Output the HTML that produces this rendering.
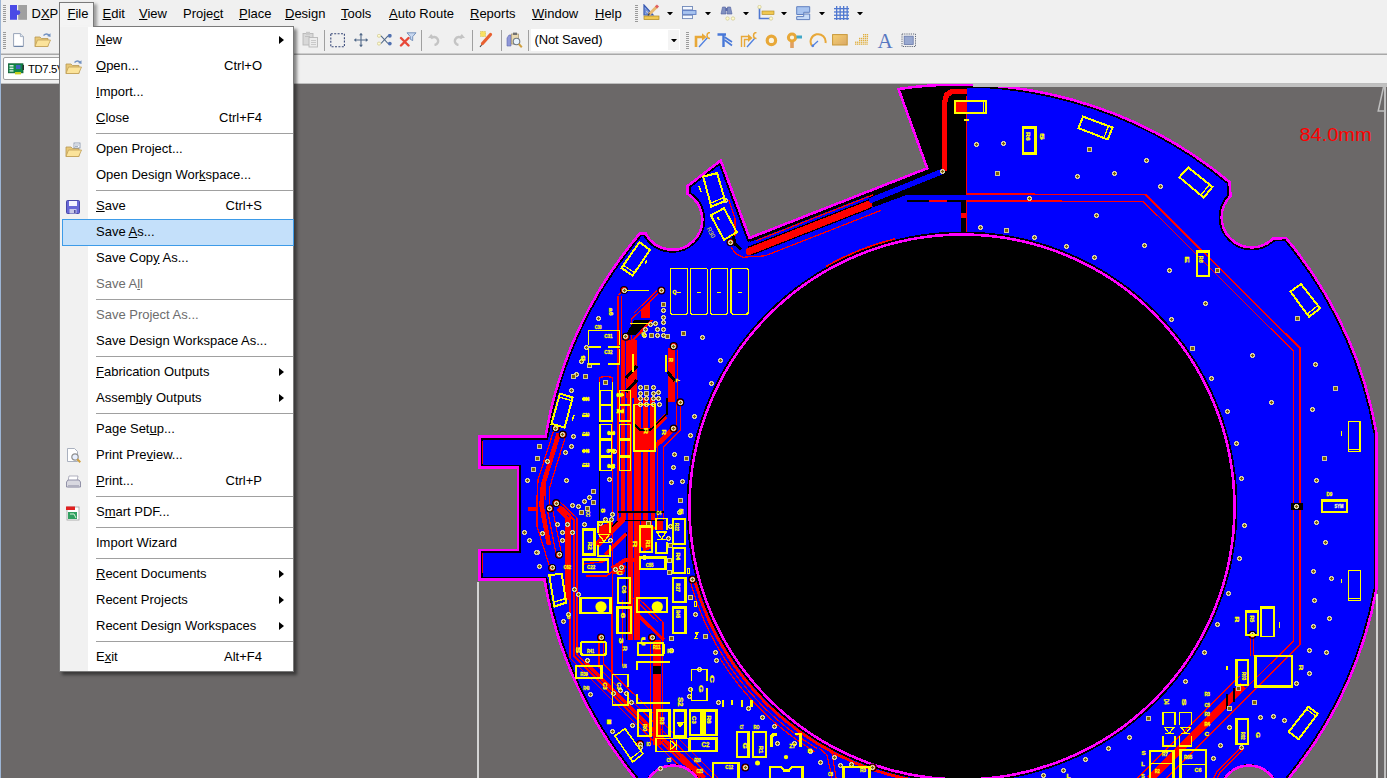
<!DOCTYPE html>
<html><head><meta charset="utf-8"><title>PCB</title>
<style>
*{box-sizing:border-box;margin:0;padding:0}
html,body{width:1387px;height:778px;overflow:hidden;background:#f0f0f0;font-family:"Liberation Sans",sans-serif;}
#root{position:absolute;left:0;top:0;width:1387px;height:778px;overflow:hidden;background:#f0f0f0}
#work{position:absolute;left:0;top:0;width:1387px;height:778px}
#menubar{position:absolute;left:0;top:0;height:27px;width:1387px;}
.mb{position:absolute;top:5.5px;font-size:13px;color:#000;white-space:nowrap;line-height:16px}
.mb u{text-decoration:underline;text-underline-offset:1px}
#filebtn{position:absolute;left:59px;top:2px;width:35px;height:25px;border:1px solid #7a7a7a;border-bottom:none;background:#f4f4f4;box-shadow:3px 2px 3px rgba(0,0,0,0.35)}
#menu{position:absolute;left:59px;top:26px;width:235px;height:646px;background:#fff;border:1px solid #7a7a7a;box-shadow:3px 3px 3px rgba(0,0,0,0.45);padding-top:0px}
#menu:before{content:"";position:absolute;left:0;top:0;width:28px;height:100%;background:#f1f1f1}
#menu:after{content:"";position:absolute;left:0;top:-1px;width:33px;height:1px;background:#f4f4f4}
.mi{position:relative;height:26px;font-size:13px;line-height:26px;white-space:nowrap;color:#000}
.mi .ml{position:absolute;left:36px;top:0}
.mi .ms{position:absolute;right:31px;top:0}
.mi .ma{position:absolute;left:219px;top:9px;width:0;height:0;border-left:5px solid #000;border-top:4px solid transparent;border-bottom:4px solid transparent}
.mi .mic{position:absolute;left:5px;top:5px;width:18px;height:18px}
.mi.hl:before{content:"";position:absolute;left:2px;top:0px;width:230px;height:25px;background:#c4e0fa;border:1px solid #3d9be8}
.mi.dis{color:#6d6d6d}
.msep{height:5px;position:relative}
.msep i{position:absolute;left:36px;right:0;top:2px;height:1px;background:#a0a0a0}
.tsep{position:absolute;top:30px;width:1px;height:21px;background:#a0a0a0}
.ico{position:absolute}
</style></head><body><div id="root">
<svg id="work" width="1387" height="778" viewBox="0 0 1387 778" shape-rendering="crispEdges">
<defs><clipPath id="bclip"><path d="M898.5,89 A421.5,421.5 0 0 1 1229.5,182 L1230.5,196 A30,30 0 1 0 1273,238.6 L1286,238 A421.5,421.5 0 0 1 1376.5,433 L1376.5,589 A421.5,421.5 0 0 1 1289,778 L1289,800 L635,800 L635,778 A421.5,421.5 0 0 1 544.5,579.7 L479.7,579.7 L479.7,550.1 L517.9,550.1 L517.9,467.5 L479.7,467.5 L479.7,436.7 L545.6,436.7 A421.5,421.5 0 0 1 640,233.3 L645.5,233.3 A30,30 0 1 0 687.7,194 L687.7,186 L720.7,160.4 L749.5,238 L927.2,168.3 Z"/></clipPath></defs>
<rect x="0" y="0" width="1387" height="778" fill="#6b6868"/>
<g clip-path="url(#bclip)"><path d="M898.5,89 A421.5,421.5 0 0 1 1229.5,182 L1230.5,196 A30,30 0 1 0 1273,238.6 L1286,238 A421.5,421.5 0 0 1 1376.5,433 L1376.5,589 A421.5,421.5 0 0 1 1289,778 L1289,800 L635,800 L635,778 A421.5,421.5 0 0 1 544.5,579.7 L479.7,579.7 L479.7,550.1 L517.9,550.1 L517.9,467.5 L479.7,467.5 L479.7,436.7 L545.6,436.7 A421.5,421.5 0 0 1 640,233.3 L645.5,233.3 A30,30 0 1 0 687.7,194 L687.7,186 L720.7,160.4 L749.5,238 L927.2,168.3 Z" fill="#0000ff" stroke="#000" stroke-width="6"/>
<polygon points="890,80 966.5,80 966.5,194.8 907,194.8 873,207.3 867.3,192.9 927.2,168.3" fill="#000000"/>
<polyline points="932.768,168.803 749.361,240.707" fill="none" stroke="#000000" stroke-width="3"/>
<polyline points="873.165,194.855 755.859,240.845" fill="none" stroke="#ff0000" stroke-width="1.2"/>
<polyline points="942.6,171.3 869.149,201.048" fill="none" stroke="#0000ff" stroke-width="5.5"/>
<polyline points="870.244,203.841 749.214,251.291" fill="none" stroke="#000000" stroke-width="9.5"/>
<polyline points="872.726,204.694 923,184.984" fill="none" stroke="#000000" stroke-width="4.5"/>
<polyline points="868.382,204.571 749.214,251.291" stroke-linecap="round" fill="none" stroke="#ff0000" stroke-width="7.2"/>
<polyline points="942.6,171.3 869.149,201.048" fill="none" stroke="#0000ff" stroke-width="5.5"/>
<polyline points="881.341,210.231 764.966,255.856 743.1,257.2 735.4,253.3 731,247" fill="none" stroke="#ff0000" stroke-width="1.2"/>
<polyline points="733,235 735,244 741,249.5" fill="none" stroke="#000000" stroke-width="3"/>
<polyline points="720.7,162 749.5,240" fill="none" stroke="#000000" stroke-width="5"/>
<polyline points="725.4,200.6 729,200.6 735,218 735,236" fill="none" stroke="#ff0000" stroke-width="1.2"/>
<rect x="907" y="200.2" width="59.5" height="1.4" fill="#000000"/>
<rect x="928.7" y="200.2" width="17.8" height="1.4" fill="#ff0000"/>
<rect x="961.4" y="88" width="5.1" height="107" fill="#000000"/>
<rect x="961.4" y="200.4" width="5.1" height="32.6" fill="#000000"/>
<rect x="961.4" y="212.5" width="5.1" height="5.5" fill="#ff0000"/>
<rect x="966" y="96" width="1.3" height="98" fill="#ff0000"/>
<rect x="966" y="201" width="1.3" height="31" fill="#ff0000"/>
<polyline points="966.5,91.5 952,91.5 946.5,95 944.3,104 944.3,171" stroke-linejoin="round" fill="none" stroke="#ff0000" stroke-width="5.5"/>
<polyline points="966.5,194.3 1145.6,194.6 1300.2,348.4 1300.2,644.3 1166,778.5" fill="none" stroke="#ff0000" stroke-width="1.8"/>
<polyline points="966.5,201 1143.2,201.3 1293.3,351.2 1293.3,640.8 1156,778" fill="none" stroke="#ff0000" stroke-width="1.3"/>
<rect x="1291" y="503" width="12" height="6.5" fill="#000000"/>
<rect x="967" y="193.4" width="59" height="1.8" fill="#ff0000"/>
<path d="M826.042,266.695 A276.1,276.1 0 0 1 895.205,239.101" fill="none" stroke="#ff0000" stroke-width="2.2"/>
<path d="M694.401,579.705 A277.3,277.3 0 0 0 933.014,782.781" fill="none" stroke="#ff0000" stroke-width="2.8"/>
<path d="M690.545,582.281 A281.7,281.7 0 0 0 816.914,748.464" fill="none" stroke="#ff0000" stroke-width="1.2"/>
<path d="M719.882,658.292 A285.5,285.5 0 0 0 814.957,751.721" fill="none" stroke="#ff0000" stroke-width="1.2"/>
<polyline points="823,745 832,753 836,778" fill="none" stroke="#ff0000" stroke-width="1.2"/>
<polyline points="819,748 827,755 832,778" fill="none" stroke="#ff0000" stroke-width="1.2"/>
<rect x="481.5" y="441" width="1.5" height="23" fill="#ff0000"/>
<rect x="481.5" y="553" width="1.5" height="20" fill="#ff0000"/>
<rect x="616.5" y="398" width="38.5" height="122" fill="#ff0000"/>
<rect x="619.3" y="398" width="1.5" height="122" fill="#0000ff"/>
<rect x="625" y="398" width="2.2" height="122" fill="#0000ff"/>
<rect x="631.9" y="398" width="1.9" height="122" fill="#0000ff"/>
<rect x="641.3" y="398" width="1.9" height="122" fill="#0000ff"/>
<rect x="648.2" y="398" width="1.8" height="122" fill="#0000ff"/>
<rect x="657.2" y="440" width="1.2" height="80" fill="#ff0000"/>
<rect x="662.6" y="450" width="1.2" height="70" fill="#ff0000"/>
<rect x="611.6" y="390" width="1" height="210" fill="#ff0000"/>
<rect x="598.8" y="400" width="0.8" height="120" fill="#000000"/>
<rect x="621" y="340" width="3.8" height="58" fill="#ff0000"/>
<rect x="626" y="340" width="11" height="58" fill="#ff0000"/>
<polyline points="626,378 637,366" fill="none" stroke="#000000" stroke-width="3"/>
<polyline points="626,392 637,380" fill="none" stroke="#000000" stroke-width="3"/>
<rect x="617.3" y="296" width="1.2" height="102" fill="#ff0000"/>
<rect x="620.6" y="296" width="1" height="44" fill="#ff0000"/>
<polyline points="624,290 618,295" fill="none" stroke="#ff0000" stroke-width="1.2"/>
<polygon points="661,291 641,310 641,318 650,318 650,302" fill="#ff0000"/>
<polyline points="661.4,290.5 631.7,319 631.7,340" fill="none" stroke="#ff0000" stroke-width="1.2"/>
<polyline points="657,290.5 634,313" fill="none" stroke="#ff0000" stroke-width="1.2"/>
<polygon points="634,320 650,320 636,335 626,335" fill="#000000"/>
<polyline points="652,320 632,341" fill="none" stroke="#ff0000" stroke-width="2.2"/>
<rect x="667.5" y="348" width="7.5" height="54" fill="#ff0000"/>
<polyline points="667.5,372 675,381" fill="none" stroke="#000000" stroke-width="3"/>
<rect x="676.5" y="350" width="1" height="50" fill="#ff0000"/>
<polyline points="680.3,402.3 680.3,430 663.2,447 663.2,470" fill="none" stroke="#ff0000" stroke-width="1.2"/>
<polyline points="676.5,402 676.5,425 657.8,443 657.8,470" fill="none" stroke="#ff0000" stroke-width="1.2"/>
<polyline points="673.7,428.6 652.5,449 652.5,470" fill="none" stroke="#ff0000" stroke-width="4.6"/>
<polyline points="666,416 645.5,436 645.5,470" fill="none" stroke="#ff0000" stroke-width="4.8"/>
<polygon points="634,428 655,428 655,440 648,452 634,452" fill="#ff0000"/>
<polyline points="634,424 640,430 650,430 667,414 667,398" fill="none" stroke="#000000" stroke-width="1.5"/>
<rect x="618" y="511.4" width="46" height="1.4" fill="#000000"/>
<rect x="616.5" y="513" width="38.5" height="7" fill="#ff0000"/>
<rect x="619.3" y="513" width="1.5" height="7" fill="#0000ff"/>
<rect x="625.7" y="513" width="1.8" height="7" fill="#0000ff"/>
<rect x="632.7" y="513" width="1.7" height="7" fill="#0000ff"/>
<rect x="641.3" y="513" width="1.7" height="7" fill="#0000ff"/>
<rect x="648.3" y="513" width="2.3" height="7" fill="#0000ff"/>
<rect x="618" y="519.5" width="46" height="1.3" fill="#000000"/>
<rect x="627.5" y="520.8" width="12" height="119.2" fill="#ff0000"/>
<rect x="632.7" y="520.8" width="1.5" height="119.2" fill="#0000ff"/>
<rect x="626.4" y="532" width="1" height="108" fill="#000000"/>
<polyline points="623,519 596,546" fill="none" stroke="#ff0000" stroke-width="6.5"/>
<polyline points="626,534 605,555" fill="none" stroke="#ff0000" stroke-width="3"/>
<polyline points="617.5,521 601,537" fill="none" stroke="#000000" stroke-width="1.6"/>
<polyline points="653,526 639,546" fill="none" stroke="#ff0000" stroke-width="5.5"/>
<rect x="657" y="520.8" width="6.3" height="8.7" fill="#ff0000"/>
<rect x="641" y="521" width="11" height="7" fill="#ff0000"/>
<polygon points="611,566 620,562.5 626,566 624,573.5 613,574" fill="#ff0000"/>
<polyline points="583.5,564 603,561.8 607,559" fill="none" stroke="#ff0000" stroke-width="1.4"/>
<polyline points="553.6,430.9 538,480 536.9,500 536.9,526 550,567.9" fill="none" stroke="#ff0000" stroke-width="1.3"/>
<polyline points="558.8,433.2 543,485 541.5,505 549,545" fill="none" stroke="#ff0000" stroke-width="4.6"/>
<polyline points="565.7,435.6 549.5,488 549.8,508.5" fill="none" stroke="#ff0000" stroke-width="1.3"/>
<polyline points="546,470 545.2,500" fill="none" stroke="#ff0000" stroke-width="1.2"/>
<rect x="528" y="506.5" width="10" height="4.5" fill="#ff0000"/>
<polyline points="549.8,508.5 559,554.8" stroke-linecap="round" fill="none" stroke="#ff0000" stroke-width="6.5"/>
<polyline points="549.8,508.5 559,554.8" stroke-linecap="round" fill="none" stroke="#0000ff" stroke-width="4"/>
<polyline points="556.2,503.1 574,520 574,656.3 647.7,730 700,778" fill="none" stroke="#ff0000" stroke-width="2.4"/>
<polyline points="560,502 577,518 577,654.8 654,731 702,778" fill="none" stroke="#ff0000" stroke-width="1.2"/>
<polyline points="563,507 570,514 570,658 640,728 692,778" fill="none" stroke="#ff0000" stroke-width="1.2"/>
<polyline points="558,509 567,518 567,600" fill="none" stroke="#ff0000" stroke-width="3.5"/>
<polyline points="585,662 604,681 650,727 705,778" fill="none" stroke="#ff0000" stroke-width="4"/>
<polyline points="599,640 599,668 640,709 712,778" fill="none" stroke="#ff0000" stroke-width="1.2"/>
<polyline points="603.5,640 603.5,664 646,706 718,778" fill="none" stroke="#ff0000" stroke-width="1.2"/>
<rect x="652.7" y="640" width="8.5" height="105" fill="#ff0000"/>
<rect x="652.7" y="665.6" width="8.5" height="8.4" fill="#000000"/>
<rect x="650" y="640" width="1" height="105" fill="#ff0000"/>
<rect x="662.4" y="630" width="1" height="115" fill="#ff0000"/>
<polyline points="638,598 662.9,622 662.9,640" fill="none" stroke="#ff0000" stroke-width="1.2"/>
<polyline points="633,598 658,622" fill="none" stroke="#ff0000" stroke-width="1.2"/>
<polyline points="612,600 612,690" fill="none" stroke="#ff0000" stroke-width="1.2"/>
<polyline points="622.5,600 622.5,666" fill="none" stroke="#ff0000" stroke-width="1.2"/>
<polygon points="597,528 612,521 612,530 600,540" fill="#ff0000"/>
<polygon points="640,528 652,528 652,548 643,552" fill="#ff0000"/>
<polyline points="612,569 625,560 636,560" fill="none" stroke="#ff0000" stroke-width="4"/>
<polyline points="618,568 606,576 586,576" fill="none" stroke="#ff0000" stroke-width="1.5"/>
<polyline points="635,612 648,625 664,640" fill="none" stroke="#ff0000" stroke-width="3"/>
<polyline points="599.3,382 599.3,378 603,376.6 609,376.6 612.4,378 612.4,382" fill="none" stroke="#ff0000" stroke-width="1.5"/>
<polyline points="1240,676 1225.5,690 1137,778.5" fill="none" stroke="#ff0000" stroke-width="1.3"/>
<polyline points="1243,686 1150,779" fill="none" stroke="#ff0000" stroke-width="7.4"/>
<polyline points="1226.5,694 1226.5,709" fill="none" stroke="#000000" stroke-width="2"/>
<polyline points="1234,688 1234,702" fill="none" stroke="#000000" stroke-width="1.6"/>
<polyline points="1250.7,636 1250.7,656" fill="none" stroke="#ff0000" stroke-width="1.2"/>
<polyline points="1253.8,636 1253.8,656" fill="none" stroke="#ff0000" stroke-width="1.2"/>
<polyline points="1240.7,747.7 1237.3,751.1 1217,771.4 1213.6,778" fill="none" stroke="#ff0000" stroke-width="1.3"/>
<polyline points="1244.1,748.8 1219.8,773.1 1217,778" fill="none" stroke="#ff0000" stroke-width="1.3"/>
</g>
<path d="M898.5,89 A421.5,421.5 0 0 1 1229.5,182 L1230.5,196 A30,30 0 1 0 1273,238.6 L1286,238 A421.5,421.5 0 0 1 1376.5,433 L1376.5,589 A421.5,421.5 0 0 1 1289,778 L1289,800 L635,800 L635,778 A421.5,421.5 0 0 1 544.5,579.7 L479.7,579.7 L479.7,550.1 L517.9,550.1 L517.9,467.5 L479.7,467.5 L479.7,436.7 L545.6,436.7 A421.5,421.5 0 0 1 640,233.3 L645.5,233.3 A30,30 0 1 0 687.7,194 L687.7,186 L720.7,160.4 L749.5,238 L927.2,168.3 Z" fill="none" stroke="#ff00ff" stroke-width="2.6"/>
<circle cx="673" cy="794.5" r="30.5" fill="#000"/><circle cx="673" cy="794.5" r="29" fill="#6b6868" stroke="#ff00ff" stroke-width="2.6"/>
<circle cx="1249" cy="794.5" r="30.5" fill="#000"/><circle cx="1249" cy="794.5" r="29" fill="#6b6868" stroke="#ff00ff" stroke-width="2.6"/>
<circle cx="962" cy="507" r="274" fill="#000" stroke="#000" stroke-width="3"/>
<circle cx="962" cy="507" r="272.5" fill="none" stroke="#ff00ff" stroke-width="2.6"/>
<circle cx="555.9" cy="428" r="4" fill="#000" shape-rendering="auto"/><circle cx="555.9" cy="428" r="2.9" fill="#ff0000" shape-rendering="auto"/><rect x="553" y="427" width="5" height="3" fill="#d4cca8"/><rect x="554" y="426" width="3" height="5" fill="#d4cca8"/><rect x="554" y="428" width="3" height="1" fill="#806200"/><rect x="555" y="427" width="1" height="3" fill="#806200"/>
<circle cx="562.8" cy="434.6" r="4" fill="#000" shape-rendering="auto"/><circle cx="562.8" cy="434.6" r="2.9" fill="#ff0000" shape-rendering="auto"/><rect x="560" y="433" width="5" height="3" fill="#d4cca8"/><rect x="561" y="432" width="3" height="5" fill="#d4cca8"/><rect x="561" y="434" width="3" height="1" fill="#806200"/><rect x="562" y="433" width="1" height="3" fill="#806200"/>
<circle cx="624" cy="290" r="4" fill="#000" shape-rendering="auto"/><circle cx="624" cy="290" r="2.9" fill="#ff0000" shape-rendering="auto"/><rect x="622" y="289" width="5" height="3" fill="#d4cca8"/><rect x="623" y="288" width="3" height="5" fill="#d4cca8"/><rect x="623" y="290" width="3" height="1" fill="#806200"/><rect x="624" y="289" width="1" height="3" fill="#806200"/>
<circle cx="661.4" cy="290.5" r="4" fill="#000" shape-rendering="auto"/><circle cx="661.4" cy="290.5" r="2.9" fill="#ff0000" shape-rendering="auto"/><rect x="659" y="289" width="5" height="3" fill="#d4cca8"/><rect x="660" y="288" width="3" height="5" fill="#d4cca8"/><rect x="660" y="290" width="3" height="1" fill="#806200"/><rect x="661" y="289" width="1" height="3" fill="#806200"/>
<circle cx="625.9" cy="336.8" r="4" fill="#000" shape-rendering="auto"/><circle cx="625.9" cy="336.8" r="2.9" fill="#ff0000" shape-rendering="auto"/><rect x="623" y="335" width="5" height="3" fill="#d4cca8"/><rect x="624" y="334" width="3" height="5" fill="#d4cca8"/><rect x="624" y="336" width="3" height="1" fill="#806200"/><rect x="625" y="335" width="1" height="3" fill="#806200"/>
<circle cx="673.7" cy="346" r="4" fill="#000" shape-rendering="auto"/><circle cx="673.7" cy="346" r="2.9" fill="#ff0000" shape-rendering="auto"/><rect x="671" y="345" width="5" height="3" fill="#d4cca8"/><rect x="672" y="344" width="3" height="5" fill="#d4cca8"/><rect x="672" y="346" width="3" height="1" fill="#806200"/><rect x="673" y="345" width="1" height="3" fill="#806200"/>
<circle cx="680.3" cy="402.3" r="4" fill="#000" shape-rendering="auto"/><circle cx="680.3" cy="402.3" r="2.9" fill="#ff0000" shape-rendering="auto"/><rect x="678" y="401" width="5" height="3" fill="#d4cca8"/><rect x="679" y="400" width="3" height="5" fill="#d4cca8"/><rect x="679" y="402" width="3" height="1" fill="#806200"/><rect x="680" y="401" width="1" height="3" fill="#806200"/>
<circle cx="673.7" cy="428.6" r="4" fill="#000" shape-rendering="auto"/><circle cx="673.7" cy="428.6" r="2.9" fill="#ff0000" shape-rendering="auto"/><rect x="671" y="427" width="5" height="3" fill="#d4cca8"/><rect x="672" y="426" width="3" height="5" fill="#d4cca8"/><rect x="672" y="428" width="3" height="1" fill="#806200"/><rect x="673" y="427" width="1" height="3" fill="#806200"/>
<circle cx="556.2" cy="503.1" r="4" fill="#000" shape-rendering="auto"/><circle cx="556.2" cy="503.1" r="2.9" fill="#ff0000" shape-rendering="auto"/><rect x="554" y="502" width="5" height="3" fill="#d4cca8"/><rect x="555" y="501" width="3" height="5" fill="#d4cca8"/><rect x="555" y="503" width="3" height="1" fill="#806200"/><rect x="556" y="502" width="1" height="3" fill="#806200"/>
<circle cx="549.8" cy="508.5" r="4" fill="#000" shape-rendering="auto"/><circle cx="549.8" cy="508.5" r="2.9" fill="#ff0000" shape-rendering="auto"/><rect x="547" y="507" width="5" height="3" fill="#d4cca8"/><rect x="548" y="506" width="3" height="5" fill="#d4cca8"/><rect x="548" y="508" width="3" height="1" fill="#806200"/><rect x="549" y="507" width="1" height="3" fill="#806200"/>
<circle cx="559" cy="554.8" r="4" fill="#000" shape-rendering="auto"/><circle cx="559" cy="554.8" r="2.9" fill="#ff0000" shape-rendering="auto"/><rect x="557" y="553" width="5" height="3" fill="#d4cca8"/><rect x="558" y="552" width="3" height="5" fill="#d4cca8"/><rect x="558" y="554" width="3" height="1" fill="#806200"/><rect x="559" y="553" width="1" height="3" fill="#806200"/>
<circle cx="552.1" cy="567.9" r="4" fill="#000" shape-rendering="auto"/><circle cx="552.1" cy="567.9" r="2.9" fill="#ff0000" shape-rendering="auto"/><rect x="550" y="566" width="5" height="3" fill="#d4cca8"/><rect x="551" y="565" width="3" height="5" fill="#d4cca8"/><rect x="551" y="567" width="3" height="1" fill="#806200"/><rect x="552" y="566" width="1" height="3" fill="#806200"/>
<circle cx="692.4" cy="579.4" r="4" fill="#000" shape-rendering="auto"/><circle cx="692.4" cy="579.4" r="2.9" fill="#ff0000" shape-rendering="auto"/><rect x="690" y="578" width="5" height="3" fill="#d4cca8"/><rect x="691" y="577" width="3" height="5" fill="#d4cca8"/><rect x="691" y="579" width="3" height="1" fill="#806200"/><rect x="692" y="578" width="1" height="3" fill="#806200"/>
<circle cx="730.5" cy="242.2" r="4" fill="#000" shape-rendering="auto"/><circle cx="730.5" cy="242.2" r="2.9" fill="#ff0000" shape-rendering="auto"/><rect x="728" y="241" width="5" height="3" fill="#d4cca8"/><rect x="729" y="240" width="3" height="5" fill="#d4cca8"/><rect x="729" y="242" width="3" height="1" fill="#806200"/><rect x="730" y="241" width="1" height="3" fill="#806200"/>
<circle cx="1252.3" cy="634.8" r="4" fill="#000" shape-rendering="auto"/><circle cx="1252.3" cy="634.8" r="2.9" fill="#ff0000" shape-rendering="auto"/><rect x="1250" y="633" width="5" height="3" fill="#d4cca8"/><rect x="1251" y="632" width="3" height="5" fill="#d4cca8"/><rect x="1251" y="634" width="3" height="1" fill="#806200"/><rect x="1252" y="633" width="1" height="3" fill="#806200"/>
<circle cx="745.3" cy="767.4" r="4" fill="#000" shape-rendering="auto"/><circle cx="745.3" cy="767.4" r="2.9" fill="#ff0000" shape-rendering="auto"/><rect x="743" y="766" width="5" height="3" fill="#d4cca8"/><rect x="744" y="765" width="3" height="5" fill="#d4cca8"/><rect x="744" y="767" width="3" height="1" fill="#806200"/><rect x="745" y="766" width="1" height="3" fill="#806200"/>
<circle cx="872.7" cy="767.5" r="4" fill="#000" shape-rendering="auto"/><circle cx="872.7" cy="767.5" r="2.9" fill="#ff0000" shape-rendering="auto"/><rect x="870" y="766" width="5" height="3" fill="#d4cca8"/><rect x="871" y="765" width="3" height="5" fill="#d4cca8"/><rect x="871" y="767" width="3" height="1" fill="#806200"/><rect x="872" y="766" width="1" height="3" fill="#806200"/>
<circle cx="640" cy="744" r="4" fill="#000" shape-rendering="auto"/><circle cx="640" cy="744" r="2.9" fill="#ff0000" shape-rendering="auto"/><rect x="638" y="743" width="5" height="3" fill="#d4cca8"/><rect x="639" y="742" width="3" height="5" fill="#d4cca8"/><rect x="639" y="744" width="3" height="1" fill="#806200"/><rect x="640" y="743" width="1" height="3" fill="#806200"/>
<circle cx="601" cy="637.5" r="4" fill="#000" shape-rendering="auto"/><circle cx="601" cy="637.5" r="2.9" fill="#ff0000" shape-rendering="auto"/><rect x="599" y="636" width="5" height="3" fill="#d4cca8"/><rect x="600" y="635" width="3" height="5" fill="#d4cca8"/><rect x="600" y="637" width="3" height="1" fill="#806200"/><rect x="601" y="636" width="1" height="3" fill="#806200"/>
<circle cx="652" cy="637.5" r="4" fill="#000" shape-rendering="auto"/><circle cx="652" cy="637.5" r="2.9" fill="#ff0000" shape-rendering="auto"/><rect x="650" y="636" width="5" height="3" fill="#d4cca8"/><rect x="651" y="635" width="3" height="5" fill="#d4cca8"/><rect x="651" y="637" width="3" height="1" fill="#806200"/><rect x="652" y="636" width="1" height="3" fill="#806200"/>
<rect x="974" y="143" width="5" height="3" fill="#d4cca8"/><rect x="975" y="142" width="3" height="5" fill="#d4cca8"/><rect x="975" y="144" width="3" height="1" fill="#806200"/><rect x="976" y="143" width="1" height="3" fill="#806200"/>
<rect x="1001" y="142" width="5" height="3" fill="#d4cca8"/><rect x="1002" y="141" width="3" height="5" fill="#d4cca8"/><rect x="1002" y="143" width="3" height="1" fill="#806200"/><rect x="1003" y="142" width="1" height="3" fill="#806200"/>
<rect x="1075" y="175" width="5" height="3" fill="#d4cca8"/><rect x="1076" y="174" width="3" height="5" fill="#d4cca8"/><rect x="1076" y="176" width="3" height="1" fill="#806200"/><rect x="1077" y="175" width="1" height="3" fill="#806200"/>
<rect x="1112" y="172" width="5" height="3" fill="#d4cca8"/><rect x="1113" y="171" width="3" height="5" fill="#d4cca8"/><rect x="1113" y="173" width="3" height="1" fill="#806200"/><rect x="1114" y="172" width="1" height="3" fill="#806200"/>
<rect x="1144" y="159" width="5" height="3" fill="#d4cca8"/><rect x="1145" y="158" width="3" height="5" fill="#d4cca8"/><rect x="1145" y="160" width="3" height="1" fill="#806200"/><rect x="1146" y="159" width="1" height="3" fill="#806200"/>
<rect x="1158" y="185" width="5" height="3" fill="#d4cca8"/><rect x="1159" y="184" width="3" height="5" fill="#d4cca8"/><rect x="1159" y="186" width="3" height="1" fill="#806200"/><rect x="1160" y="185" width="1" height="3" fill="#806200"/>
<rect x="1094" y="214" width="5" height="3" fill="#d4cca8"/><rect x="1095" y="213" width="3" height="5" fill="#d4cca8"/><rect x="1095" y="215" width="3" height="1" fill="#806200"/><rect x="1096" y="214" width="1" height="3" fill="#806200"/>
<rect x="978" y="226" width="5" height="3" fill="#d4cca8"/><rect x="979" y="225" width="3" height="5" fill="#d4cca8"/><rect x="979" y="227" width="3" height="1" fill="#806200"/><rect x="980" y="226" width="1" height="3" fill="#806200"/>
<rect x="1032" y="236" width="5" height="3" fill="#d4cca8"/><rect x="1033" y="235" width="3" height="5" fill="#d4cca8"/><rect x="1033" y="237" width="3" height="1" fill="#806200"/><rect x="1034" y="236" width="1" height="3" fill="#806200"/>
<rect x="1064" y="245" width="5" height="3" fill="#d4cca8"/><rect x="1065" y="244" width="3" height="5" fill="#d4cca8"/><rect x="1065" y="246" width="3" height="1" fill="#806200"/><rect x="1066" y="245" width="1" height="3" fill="#806200"/>
<rect x="1092" y="256" width="5" height="3" fill="#d4cca8"/><rect x="1093" y="255" width="3" height="5" fill="#d4cca8"/><rect x="1093" y="257" width="3" height="1" fill="#806200"/><rect x="1094" y="256" width="1" height="3" fill="#806200"/>
<rect x="1142" y="244" width="5" height="3" fill="#d4cca8"/><rect x="1143" y="243" width="3" height="5" fill="#d4cca8"/><rect x="1143" y="245" width="3" height="1" fill="#806200"/><rect x="1144" y="244" width="1" height="3" fill="#806200"/>
<rect x="1167" y="269" width="5" height="3" fill="#d4cca8"/><rect x="1168" y="268" width="3" height="5" fill="#d4cca8"/><rect x="1168" y="270" width="3" height="1" fill="#806200"/><rect x="1169" y="269" width="1" height="3" fill="#806200"/>
<rect x="1203" y="302" width="5" height="3" fill="#d4cca8"/><rect x="1204" y="301" width="3" height="5" fill="#d4cca8"/><rect x="1204" y="303" width="3" height="1" fill="#806200"/><rect x="1205" y="302" width="1" height="3" fill="#806200"/>
<rect x="1169" y="318" width="5" height="3" fill="#d4cca8"/><rect x="1170" y="317" width="3" height="5" fill="#d4cca8"/><rect x="1170" y="319" width="3" height="1" fill="#806200"/><rect x="1171" y="318" width="1" height="3" fill="#806200"/>
<rect x="1250" y="354" width="5" height="3" fill="#d4cca8"/><rect x="1251" y="353" width="3" height="5" fill="#d4cca8"/><rect x="1251" y="355" width="3" height="1" fill="#806200"/><rect x="1252" y="354" width="1" height="3" fill="#806200"/>
<rect x="1209" y="377" width="5" height="3" fill="#d4cca8"/><rect x="1210" y="376" width="3" height="5" fill="#d4cca8"/><rect x="1210" y="378" width="3" height="1" fill="#806200"/><rect x="1211" y="377" width="1" height="3" fill="#806200"/>
<rect x="1269" y="401" width="5" height="3" fill="#d4cca8"/><rect x="1270" y="400" width="3" height="5" fill="#d4cca8"/><rect x="1270" y="402" width="3" height="1" fill="#806200"/><rect x="1271" y="401" width="1" height="3" fill="#806200"/>
<rect x="1225" y="410" width="5" height="3" fill="#d4cca8"/><rect x="1226" y="409" width="3" height="5" fill="#d4cca8"/><rect x="1226" y="411" width="3" height="1" fill="#806200"/><rect x="1227" y="410" width="1" height="3" fill="#806200"/>
<rect x="1313" y="363" width="5" height="3" fill="#d4cca8"/><rect x="1314" y="362" width="3" height="5" fill="#d4cca8"/><rect x="1314" y="364" width="3" height="1" fill="#806200"/><rect x="1315" y="363" width="1" height="3" fill="#806200"/>
<rect x="1310" y="408" width="5" height="3" fill="#d4cca8"/><rect x="1311" y="407" width="3" height="5" fill="#d4cca8"/><rect x="1311" y="409" width="3" height="1" fill="#806200"/><rect x="1312" y="408" width="1" height="3" fill="#806200"/>
<rect x="1234" y="442" width="5" height="3" fill="#d4cca8"/><rect x="1235" y="441" width="3" height="5" fill="#d4cca8"/><rect x="1235" y="443" width="3" height="1" fill="#806200"/><rect x="1236" y="442" width="1" height="3" fill="#806200"/>
<rect x="1239" y="477" width="5" height="3" fill="#d4cca8"/><rect x="1240" y="476" width="3" height="5" fill="#d4cca8"/><rect x="1240" y="478" width="3" height="1" fill="#806200"/><rect x="1241" y="477" width="1" height="3" fill="#806200"/>
<rect x="1242" y="524" width="5" height="3" fill="#d4cca8"/><rect x="1243" y="523" width="3" height="5" fill="#d4cca8"/><rect x="1243" y="525" width="3" height="1" fill="#806200"/><rect x="1244" y="524" width="1" height="3" fill="#806200"/>
<rect x="1237" y="557" width="5" height="3" fill="#d4cca8"/><rect x="1238" y="556" width="3" height="5" fill="#d4cca8"/><rect x="1238" y="558" width="3" height="1" fill="#806200"/><rect x="1239" y="557" width="1" height="3" fill="#806200"/>
<rect x="1226" y="592" width="5" height="3" fill="#d4cca8"/><rect x="1227" y="591" width="3" height="5" fill="#d4cca8"/><rect x="1227" y="593" width="3" height="1" fill="#806200"/><rect x="1228" y="592" width="1" height="3" fill="#806200"/>
<rect x="1314" y="479" width="5" height="3" fill="#d4cca8"/><rect x="1315" y="478" width="3" height="5" fill="#d4cca8"/><rect x="1315" y="480" width="3" height="1" fill="#806200"/><rect x="1316" y="479" width="1" height="3" fill="#806200"/>
<rect x="1314" y="521" width="5" height="3" fill="#d4cca8"/><rect x="1315" y="520" width="3" height="5" fill="#d4cca8"/><rect x="1315" y="522" width="3" height="1" fill="#806200"/><rect x="1316" y="521" width="1" height="3" fill="#806200"/>
<rect x="1323" y="541" width="5" height="3" fill="#d4cca8"/><rect x="1324" y="540" width="3" height="5" fill="#d4cca8"/><rect x="1324" y="542" width="3" height="1" fill="#806200"/><rect x="1325" y="541" width="1" height="3" fill="#806200"/>
<rect x="1311" y="570" width="5" height="3" fill="#d4cca8"/><rect x="1312" y="569" width="3" height="5" fill="#d4cca8"/><rect x="1312" y="571" width="3" height="1" fill="#806200"/><rect x="1313" y="570" width="1" height="3" fill="#806200"/>
<rect x="1329" y="577" width="5" height="3" fill="#d4cca8"/><rect x="1330" y="576" width="3" height="5" fill="#d4cca8"/><rect x="1330" y="578" width="3" height="1" fill="#806200"/><rect x="1331" y="577" width="1" height="3" fill="#806200"/>
<rect x="1312" y="599" width="5" height="3" fill="#d4cca8"/><rect x="1313" y="598" width="3" height="5" fill="#d4cca8"/><rect x="1313" y="600" width="3" height="1" fill="#806200"/><rect x="1314" y="599" width="1" height="3" fill="#806200"/>
<rect x="1327" y="617" width="5" height="3" fill="#d4cca8"/><rect x="1328" y="616" width="3" height="5" fill="#d4cca8"/><rect x="1328" y="618" width="3" height="1" fill="#806200"/><rect x="1329" y="617" width="1" height="3" fill="#806200"/>
<rect x="1311" y="625" width="5" height="3" fill="#d4cca8"/><rect x="1312" y="624" width="3" height="5" fill="#d4cca8"/><rect x="1312" y="626" width="3" height="1" fill="#806200"/><rect x="1313" y="625" width="1" height="3" fill="#806200"/>
<rect x="1307" y="649" width="5" height="3" fill="#d4cca8"/><rect x="1308" y="648" width="3" height="5" fill="#d4cca8"/><rect x="1308" y="650" width="3" height="1" fill="#806200"/><rect x="1309" y="649" width="1" height="3" fill="#806200"/>
<rect x="1324" y="651" width="5" height="3" fill="#d4cca8"/><rect x="1325" y="650" width="3" height="5" fill="#d4cca8"/><rect x="1325" y="652" width="3" height="1" fill="#806200"/><rect x="1326" y="651" width="1" height="3" fill="#806200"/>
<rect x="1307" y="672" width="5" height="3" fill="#d4cca8"/><rect x="1308" y="671" width="3" height="5" fill="#d4cca8"/><rect x="1308" y="673" width="3" height="1" fill="#806200"/><rect x="1309" y="672" width="1" height="3" fill="#806200"/>
<rect x="1294" y="682" width="5" height="3" fill="#d4cca8"/><rect x="1295" y="681" width="3" height="5" fill="#d4cca8"/><rect x="1295" y="683" width="3" height="1" fill="#806200"/><rect x="1296" y="682" width="1" height="3" fill="#806200"/>
<rect x="1215" y="623" width="5" height="3" fill="#d4cca8"/><rect x="1216" y="622" width="3" height="5" fill="#d4cca8"/><rect x="1216" y="624" width="3" height="1" fill="#806200"/><rect x="1217" y="623" width="1" height="3" fill="#806200"/>
<rect x="1202" y="651" width="5" height="3" fill="#d4cca8"/><rect x="1203" y="650" width="3" height="5" fill="#d4cca8"/><rect x="1203" y="652" width="3" height="1" fill="#806200"/><rect x="1204" y="651" width="1" height="3" fill="#806200"/>
<rect x="1183" y="680" width="5" height="3" fill="#d4cca8"/><rect x="1184" y="679" width="3" height="5" fill="#d4cca8"/><rect x="1184" y="681" width="3" height="1" fill="#806200"/><rect x="1185" y="680" width="1" height="3" fill="#806200"/>
<rect x="1258" y="716" width="5" height="3" fill="#d4cca8"/><rect x="1259" y="715" width="3" height="5" fill="#d4cca8"/><rect x="1259" y="717" width="3" height="1" fill="#806200"/><rect x="1260" y="716" width="1" height="3" fill="#806200"/>
<rect x="1271" y="715" width="5" height="3" fill="#d4cca8"/><rect x="1272" y="714" width="3" height="5" fill="#d4cca8"/><rect x="1272" y="716" width="3" height="1" fill="#806200"/><rect x="1273" y="715" width="1" height="3" fill="#806200"/>
<rect x="1282" y="719" width="5" height="3" fill="#d4cca8"/><rect x="1283" y="718" width="3" height="5" fill="#d4cca8"/><rect x="1283" y="720" width="3" height="1" fill="#806200"/><rect x="1284" y="719" width="1" height="3" fill="#806200"/>
<rect x="1227" y="726" width="5" height="3" fill="#d4cca8"/><rect x="1228" y="725" width="3" height="5" fill="#d4cca8"/><rect x="1228" y="727" width="3" height="1" fill="#806200"/><rect x="1229" y="726" width="1" height="3" fill="#806200"/>
<rect x="1218" y="744" width="5" height="3" fill="#d4cca8"/><rect x="1219" y="743" width="3" height="5" fill="#d4cca8"/><rect x="1219" y="745" width="3" height="1" fill="#806200"/><rect x="1220" y="744" width="1" height="3" fill="#806200"/>
<rect x="1211" y="757" width="5" height="3" fill="#d4cca8"/><rect x="1212" y="756" width="3" height="5" fill="#d4cca8"/><rect x="1212" y="758" width="3" height="1" fill="#806200"/><rect x="1213" y="757" width="1" height="3" fill="#806200"/>
<rect x="1239" y="746" width="5" height="3" fill="#d4cca8"/><rect x="1240" y="745" width="3" height="5" fill="#d4cca8"/><rect x="1240" y="747" width="3" height="1" fill="#806200"/><rect x="1241" y="746" width="1" height="3" fill="#806200"/>
<rect x="723" y="199" width="5" height="3" fill="#d4cca8"/><rect x="724" y="198" width="3" height="5" fill="#d4cca8"/><rect x="724" y="200" width="3" height="1" fill="#806200"/><rect x="725" y="199" width="1" height="3" fill="#806200"/>
<rect x="1127" y="736" width="5" height="3" fill="#d4cca8"/><rect x="1128" y="735" width="3" height="5" fill="#d4cca8"/><rect x="1128" y="737" width="3" height="1" fill="#806200"/><rect x="1129" y="736" width="1" height="3" fill="#806200"/>
<rect x="1106" y="747" width="5" height="3" fill="#d4cca8"/><rect x="1107" y="746" width="3" height="5" fill="#d4cca8"/><rect x="1107" y="748" width="3" height="1" fill="#806200"/><rect x="1108" y="747" width="1" height="3" fill="#806200"/>
<rect x="1083" y="758" width="5" height="3" fill="#d4cca8"/><rect x="1084" y="757" width="3" height="5" fill="#d4cca8"/><rect x="1084" y="759" width="3" height="1" fill="#806200"/><rect x="1085" y="758" width="1" height="3" fill="#806200"/>
<rect x="1061" y="769" width="5" height="3" fill="#d4cca8"/><rect x="1062" y="768" width="3" height="5" fill="#d4cca8"/><rect x="1062" y="770" width="3" height="1" fill="#806200"/><rect x="1063" y="769" width="1" height="3" fill="#806200"/>
<rect x="1041" y="774" width="5" height="3" fill="#d4cca8"/><rect x="1042" y="773" width="3" height="5" fill="#d4cca8"/><rect x="1042" y="775" width="3" height="1" fill="#806200"/><rect x="1043" y="774" width="1" height="3" fill="#806200"/>
<rect x="1027" y="197" width="5" height="3" fill="#d4cca8"/><rect x="1028" y="196" width="3" height="5" fill="#d4cca8"/><rect x="1028" y="198" width="3" height="1" fill="#806200"/><rect x="1029" y="197" width="1" height="3" fill="#806200"/>
<rect x="1294" y="505" width="5" height="3" fill="#d4cca8"/><rect x="1295" y="504" width="3" height="5" fill="#d4cca8"/><rect x="1295" y="506" width="3" height="1" fill="#806200"/><rect x="1296" y="505" width="1" height="3" fill="#806200"/>
<rect x="940" y="170" width="5" height="3" fill="#d4cca8"/><rect x="941" y="169" width="3" height="5" fill="#d4cca8"/><rect x="941" y="171" width="3" height="1" fill="#806200"/><rect x="942" y="170" width="1" height="3" fill="#806200"/>
<rect x="596" y="317" width="5" height="3" fill="#d4cca8"/><rect x="597" y="316" width="3" height="5" fill="#d4cca8"/><rect x="597" y="318" width="3" height="1" fill="#806200"/><rect x="598" y="317" width="1" height="3" fill="#806200"/>
<rect x="584" y="346" width="5" height="3" fill="#d4cca8"/><rect x="585" y="345" width="3" height="5" fill="#d4cca8"/><rect x="585" y="347" width="3" height="1" fill="#806200"/><rect x="586" y="346" width="1" height="3" fill="#806200"/>
<rect x="579" y="360" width="5" height="3" fill="#d4cca8"/><rect x="580" y="359" width="3" height="5" fill="#d4cca8"/><rect x="580" y="361" width="3" height="1" fill="#806200"/><rect x="581" y="360" width="1" height="3" fill="#806200"/>
<rect x="574" y="373" width="5" height="3" fill="#d4cca8"/><rect x="575" y="372" width="3" height="5" fill="#d4cca8"/><rect x="575" y="374" width="3" height="1" fill="#806200"/><rect x="576" y="373" width="1" height="3" fill="#806200"/>
<rect x="569" y="389" width="5" height="3" fill="#d4cca8"/><rect x="570" y="388" width="3" height="5" fill="#d4cca8"/><rect x="570" y="390" width="3" height="1" fill="#806200"/><rect x="571" y="389" width="1" height="3" fill="#806200"/>
<rect x="700" y="336" width="5" height="3" fill="#d4cca8"/><rect x="701" y="335" width="3" height="5" fill="#d4cca8"/><rect x="701" y="337" width="3" height="1" fill="#806200"/><rect x="702" y="336" width="1" height="3" fill="#806200"/>
<rect x="718" y="359" width="5" height="3" fill="#d4cca8"/><rect x="719" y="358" width="3" height="5" fill="#d4cca8"/><rect x="719" y="360" width="3" height="1" fill="#806200"/><rect x="720" y="359" width="1" height="3" fill="#806200"/>
<rect x="709" y="382" width="5" height="3" fill="#d4cca8"/><rect x="710" y="381" width="3" height="5" fill="#d4cca8"/><rect x="710" y="383" width="3" height="1" fill="#806200"/><rect x="711" y="382" width="1" height="3" fill="#806200"/>
<rect x="692" y="415" width="5" height="3" fill="#d4cca8"/><rect x="693" y="414" width="3" height="5" fill="#d4cca8"/><rect x="693" y="416" width="3" height="1" fill="#806200"/><rect x="694" y="415" width="1" height="3" fill="#806200"/>
<rect x="688" y="434" width="5" height="3" fill="#d4cca8"/><rect x="689" y="433" width="3" height="5" fill="#d4cca8"/><rect x="689" y="435" width="3" height="1" fill="#806200"/><rect x="690" y="434" width="1" height="3" fill="#806200"/>
<rect x="672" y="453" width="5" height="3" fill="#d4cca8"/><rect x="673" y="452" width="3" height="5" fill="#d4cca8"/><rect x="673" y="454" width="3" height="1" fill="#806200"/><rect x="674" y="453" width="1" height="3" fill="#806200"/>
<rect x="671" y="466" width="5" height="3" fill="#d4cca8"/><rect x="672" y="465" width="3" height="5" fill="#d4cca8"/><rect x="672" y="467" width="3" height="1" fill="#806200"/><rect x="673" y="466" width="1" height="3" fill="#806200"/>
<rect x="669" y="481" width="5" height="3" fill="#d4cca8"/><rect x="670" y="480" width="3" height="5" fill="#d4cca8"/><rect x="670" y="482" width="3" height="1" fill="#806200"/><rect x="671" y="481" width="1" height="3" fill="#806200"/>
<rect x="680" y="480" width="5" height="3" fill="#d4cca8"/><rect x="681" y="479" width="3" height="5" fill="#d4cca8"/><rect x="681" y="481" width="3" height="1" fill="#806200"/><rect x="682" y="480" width="1" height="3" fill="#806200"/>
<rect x="668" y="525" width="5" height="3" fill="#d4cca8"/><rect x="669" y="524" width="3" height="5" fill="#d4cca8"/><rect x="669" y="526" width="3" height="1" fill="#806200"/><rect x="670" y="525" width="1" height="3" fill="#806200"/>
<rect x="677" y="511" width="5" height="3" fill="#d4cca8"/><rect x="678" y="510" width="3" height="5" fill="#d4cca8"/><rect x="678" y="512" width="3" height="1" fill="#806200"/><rect x="679" y="511" width="1" height="3" fill="#806200"/>
<rect x="569" y="389" width="5" height="3" fill="#d4cca8"/><rect x="570" y="388" width="3" height="5" fill="#d4cca8"/><rect x="570" y="390" width="3" height="1" fill="#806200"/><rect x="571" y="389" width="1" height="3" fill="#806200"/>
<rect x="571" y="435" width="5" height="3" fill="#d4cca8"/><rect x="572" y="434" width="3" height="5" fill="#d4cca8"/><rect x="572" y="436" width="3" height="1" fill="#806200"/><rect x="573" y="435" width="1" height="3" fill="#806200"/>
<rect x="569" y="445" width="5" height="3" fill="#d4cca8"/><rect x="570" y="444" width="3" height="5" fill="#d4cca8"/><rect x="570" y="446" width="3" height="1" fill="#806200"/><rect x="571" y="445" width="1" height="3" fill="#806200"/>
<rect x="563" y="451" width="5" height="3" fill="#d4cca8"/><rect x="564" y="450" width="3" height="5" fill="#d4cca8"/><rect x="564" y="452" width="3" height="1" fill="#806200"/><rect x="565" y="451" width="1" height="3" fill="#806200"/>
<rect x="612" y="450" width="5" height="3" fill="#d4cca8"/><rect x="613" y="449" width="3" height="5" fill="#d4cca8"/><rect x="613" y="451" width="3" height="1" fill="#806200"/><rect x="614" y="450" width="1" height="3" fill="#806200"/>
<rect x="610" y="465" width="5" height="3" fill="#d4cca8"/><rect x="611" y="464" width="3" height="5" fill="#d4cca8"/><rect x="611" y="466" width="3" height="1" fill="#806200"/><rect x="612" y="465" width="1" height="3" fill="#806200"/>
<rect x="607" y="478" width="5" height="3" fill="#d4cca8"/><rect x="608" y="477" width="3" height="5" fill="#d4cca8"/><rect x="608" y="479" width="3" height="1" fill="#806200"/><rect x="609" y="478" width="1" height="3" fill="#806200"/>
<rect x="554" y="502" width="5" height="3" fill="#d4cca8"/><rect x="555" y="501" width="3" height="5" fill="#d4cca8"/><rect x="555" y="503" width="3" height="1" fill="#806200"/><rect x="556" y="502" width="1" height="3" fill="#806200"/>
<rect x="565" y="523" width="5" height="3" fill="#d4cca8"/><rect x="566" y="522" width="3" height="5" fill="#d4cca8"/><rect x="566" y="524" width="3" height="1" fill="#806200"/><rect x="567" y="523" width="1" height="3" fill="#806200"/>
<rect x="570" y="531" width="5" height="3" fill="#d4cca8"/><rect x="571" y="530" width="3" height="5" fill="#d4cca8"/><rect x="571" y="532" width="3" height="1" fill="#806200"/><rect x="572" y="531" width="1" height="3" fill="#806200"/>
<rect x="560" y="539" width="5" height="3" fill="#d4cca8"/><rect x="561" y="538" width="3" height="5" fill="#d4cca8"/><rect x="561" y="540" width="3" height="1" fill="#806200"/><rect x="562" y="539" width="1" height="3" fill="#806200"/>
<rect x="564" y="479" width="5" height="3" fill="#d4cca8"/><rect x="565" y="478" width="3" height="5" fill="#d4cca8"/><rect x="565" y="480" width="3" height="1" fill="#806200"/><rect x="566" y="479" width="1" height="3" fill="#806200"/>
<rect x="545" y="460" width="5" height="3" fill="#d4cca8"/><rect x="546" y="459" width="3" height="5" fill="#d4cca8"/><rect x="546" y="461" width="3" height="1" fill="#806200"/><rect x="547" y="460" width="1" height="3" fill="#806200"/>
<rect x="531" y="468" width="5" height="3" fill="#d4cca8"/><rect x="532" y="467" width="3" height="5" fill="#d4cca8"/><rect x="532" y="469" width="3" height="1" fill="#806200"/><rect x="533" y="468" width="1" height="3" fill="#806200"/>
<rect x="525" y="479" width="5" height="3" fill="#d4cca8"/><rect x="526" y="478" width="3" height="5" fill="#d4cca8"/><rect x="526" y="480" width="3" height="1" fill="#806200"/><rect x="527" y="479" width="1" height="3" fill="#806200"/>
<rect x="522" y="531" width="5" height="3" fill="#d4cca8"/><rect x="523" y="530" width="3" height="5" fill="#d4cca8"/><rect x="523" y="532" width="3" height="1" fill="#806200"/><rect x="524" y="531" width="1" height="3" fill="#806200"/>
<rect x="527" y="539" width="5" height="3" fill="#d4cca8"/><rect x="528" y="538" width="3" height="5" fill="#d4cca8"/><rect x="528" y="540" width="3" height="1" fill="#806200"/><rect x="529" y="539" width="1" height="3" fill="#806200"/>
<rect x="535" y="551" width="5" height="3" fill="#d4cca8"/><rect x="536" y="550" width="3" height="5" fill="#d4cca8"/><rect x="536" y="552" width="3" height="1" fill="#806200"/><rect x="537" y="551" width="1" height="3" fill="#806200"/>
<rect x="537" y="565" width="5" height="3" fill="#d4cca8"/><rect x="538" y="564" width="3" height="5" fill="#d4cca8"/><rect x="538" y="566" width="3" height="1" fill="#806200"/><rect x="539" y="565" width="1" height="3" fill="#806200"/>
<rect x="534" y="551" width="5" height="3" fill="#d4cca8"/><rect x="535" y="550" width="3" height="5" fill="#d4cca8"/><rect x="535" y="552" width="3" height="1" fill="#806200"/><rect x="536" y="551" width="1" height="3" fill="#806200"/>
<rect x="540" y="532" width="5" height="3" fill="#d4cca8"/><rect x="541" y="531" width="3" height="5" fill="#d4cca8"/><rect x="541" y="533" width="3" height="1" fill="#806200"/><rect x="542" y="532" width="1" height="3" fill="#806200"/>
<rect x="555" y="523" width="5" height="3" fill="#d4cca8"/><rect x="556" y="522" width="3" height="5" fill="#d4cca8"/><rect x="556" y="524" width="3" height="1" fill="#806200"/><rect x="557" y="523" width="1" height="3" fill="#806200"/>
<rect x="560" y="531" width="5" height="3" fill="#d4cca8"/><rect x="561" y="530" width="3" height="5" fill="#d4cca8"/><rect x="561" y="532" width="3" height="1" fill="#806200"/><rect x="562" y="531" width="1" height="3" fill="#806200"/>
<rect x="638" y="397" width="5" height="3" fill="#d4cca8"/><rect x="639" y="396" width="3" height="5" fill="#d4cca8"/><rect x="639" y="398" width="3" height="1" fill="#806200"/><rect x="640" y="397" width="1" height="3" fill="#806200"/>
<rect x="644" y="397" width="5" height="3" fill="#d4cca8"/><rect x="645" y="396" width="3" height="5" fill="#d4cca8"/><rect x="645" y="398" width="3" height="1" fill="#806200"/><rect x="646" y="397" width="1" height="3" fill="#806200"/>
<rect x="651" y="397" width="5" height="3" fill="#d4cca8"/><rect x="652" y="396" width="3" height="5" fill="#d4cca8"/><rect x="652" y="398" width="3" height="1" fill="#806200"/><rect x="653" y="397" width="1" height="3" fill="#806200"/>
<rect x="656" y="397" width="5" height="3" fill="#d4cca8"/><rect x="657" y="396" width="3" height="5" fill="#d4cca8"/><rect x="657" y="398" width="3" height="1" fill="#806200"/><rect x="658" y="397" width="1" height="3" fill="#806200"/>
<rect x="638" y="403" width="5" height="3" fill="#d4cca8"/><rect x="639" y="402" width="3" height="5" fill="#d4cca8"/><rect x="639" y="404" width="3" height="1" fill="#806200"/><rect x="640" y="403" width="1" height="3" fill="#806200"/>
<rect x="644" y="403" width="5" height="3" fill="#d4cca8"/><rect x="645" y="402" width="3" height="5" fill="#d4cca8"/><rect x="645" y="404" width="3" height="1" fill="#806200"/><rect x="646" y="403" width="1" height="3" fill="#806200"/>
<rect x="651" y="403" width="5" height="3" fill="#d4cca8"/><rect x="652" y="402" width="3" height="5" fill="#d4cca8"/><rect x="652" y="404" width="3" height="1" fill="#806200"/><rect x="653" y="403" width="1" height="3" fill="#806200"/>
<rect x="657" y="403" width="5" height="3" fill="#d4cca8"/><rect x="658" y="402" width="3" height="5" fill="#d4cca8"/><rect x="658" y="404" width="3" height="1" fill="#806200"/><rect x="659" y="403" width="1" height="3" fill="#806200"/>
<rect x="638" y="386" width="5" height="3" fill="#d4cca8"/><rect x="639" y="385" width="3" height="5" fill="#d4cca8"/><rect x="639" y="387" width="3" height="1" fill="#806200"/><rect x="640" y="386" width="1" height="3" fill="#806200"/>
<rect x="651" y="386" width="5" height="3" fill="#d4cca8"/><rect x="652" y="385" width="3" height="5" fill="#d4cca8"/><rect x="652" y="387" width="3" height="1" fill="#806200"/><rect x="653" y="386" width="1" height="3" fill="#806200"/>
<rect x="638" y="392" width="5" height="3" fill="#d4cca8"/><rect x="639" y="391" width="3" height="5" fill="#d4cca8"/><rect x="639" y="393" width="3" height="1" fill="#806200"/><rect x="640" y="392" width="1" height="3" fill="#806200"/>
<rect x="651" y="392" width="5" height="3" fill="#d4cca8"/><rect x="652" y="391" width="3" height="5" fill="#d4cca8"/><rect x="652" y="393" width="3" height="1" fill="#806200"/><rect x="653" y="392" width="1" height="3" fill="#806200"/>
<rect x="656" y="391" width="5" height="3" fill="#d4cca8"/><rect x="657" y="390" width="3" height="5" fill="#d4cca8"/><rect x="657" y="392" width="3" height="1" fill="#806200"/><rect x="658" y="391" width="1" height="3" fill="#806200"/>
<rect x="661" y="309" width="5" height="3" fill="#d4cca8"/><rect x="662" y="308" width="3" height="5" fill="#d4cca8"/><rect x="662" y="310" width="3" height="1" fill="#806200"/><rect x="663" y="309" width="1" height="3" fill="#806200"/>
<rect x="661" y="316" width="5" height="3" fill="#d4cca8"/><rect x="662" y="315" width="3" height="5" fill="#d4cca8"/><rect x="662" y="317" width="3" height="1" fill="#806200"/><rect x="663" y="316" width="1" height="3" fill="#806200"/>
<rect x="661" y="321" width="5" height="3" fill="#d4cca8"/><rect x="662" y="320" width="3" height="5" fill="#d4cca8"/><rect x="662" y="322" width="3" height="1" fill="#806200"/><rect x="663" y="321" width="1" height="3" fill="#806200"/>
<rect x="661" y="328" width="5" height="3" fill="#d4cca8"/><rect x="662" y="327" width="3" height="5" fill="#d4cca8"/><rect x="662" y="329" width="3" height="1" fill="#806200"/><rect x="663" y="328" width="1" height="3" fill="#806200"/>
<rect x="661" y="334" width="5" height="3" fill="#d4cca8"/><rect x="662" y="333" width="3" height="5" fill="#d4cca8"/><rect x="662" y="335" width="3" height="1" fill="#806200"/><rect x="663" y="334" width="1" height="3" fill="#806200"/>
<rect x="653" y="322" width="5" height="3" fill="#d4cca8"/><rect x="654" y="321" width="3" height="5" fill="#d4cca8"/><rect x="654" y="323" width="3" height="1" fill="#806200"/><rect x="655" y="322" width="1" height="3" fill="#806200"/>
<rect x="648" y="323" width="5" height="3" fill="#d4cca8"/><rect x="649" y="322" width="3" height="5" fill="#d4cca8"/><rect x="649" y="324" width="3" height="1" fill="#806200"/><rect x="650" y="323" width="1" height="3" fill="#806200"/>
<rect x="643" y="328" width="5" height="3" fill="#d4cca8"/><rect x="644" y="327" width="3" height="5" fill="#d4cca8"/><rect x="644" y="329" width="3" height="1" fill="#806200"/><rect x="645" y="328" width="1" height="3" fill="#806200"/>
<rect x="655" y="328" width="5" height="3" fill="#d4cca8"/><rect x="656" y="327" width="3" height="5" fill="#d4cca8"/><rect x="656" y="329" width="3" height="1" fill="#806200"/><rect x="657" y="328" width="1" height="3" fill="#806200"/>
<rect x="655" y="334" width="5" height="3" fill="#d4cca8"/><rect x="656" y="333" width="3" height="5" fill="#d4cca8"/><rect x="656" y="335" width="3" height="1" fill="#806200"/><rect x="657" y="334" width="1" height="3" fill="#806200"/>
<rect x="642" y="334" width="5" height="3" fill="#d4cca8"/><rect x="643" y="333" width="3" height="5" fill="#d4cca8"/><rect x="643" y="335" width="3" height="1" fill="#806200"/><rect x="644" y="334" width="1" height="3" fill="#806200"/>
<rect x="760" y="716" width="5" height="3" fill="#d4cca8"/><rect x="761" y="715" width="3" height="5" fill="#d4cca8"/><rect x="761" y="717" width="3" height="1" fill="#806200"/><rect x="762" y="716" width="1" height="3" fill="#806200"/>
<rect x="772" y="725" width="5" height="3" fill="#d4cca8"/><rect x="773" y="724" width="3" height="5" fill="#d4cca8"/><rect x="773" y="726" width="3" height="1" fill="#806200"/><rect x="774" y="725" width="1" height="3" fill="#806200"/>
<rect x="775" y="742" width="5" height="3" fill="#d4cca8"/><rect x="776" y="741" width="3" height="5" fill="#d4cca8"/><rect x="776" y="743" width="3" height="1" fill="#806200"/><rect x="777" y="742" width="1" height="3" fill="#806200"/>
<rect x="792" y="742" width="5" height="3" fill="#d4cca8"/><rect x="793" y="741" width="3" height="5" fill="#d4cca8"/><rect x="793" y="743" width="3" height="1" fill="#806200"/><rect x="794" y="742" width="1" height="3" fill="#806200"/>
<rect x="808" y="750" width="5" height="3" fill="#d4cca8"/><rect x="809" y="749" width="3" height="5" fill="#d4cca8"/><rect x="809" y="751" width="3" height="1" fill="#806200"/><rect x="810" y="750" width="1" height="3" fill="#806200"/>
<rect x="818" y="761" width="5" height="3" fill="#d4cca8"/><rect x="819" y="760" width="3" height="5" fill="#d4cca8"/><rect x="819" y="762" width="3" height="1" fill="#806200"/><rect x="820" y="761" width="1" height="3" fill="#806200"/>
<rect x="832" y="756" width="5" height="3" fill="#d4cca8"/><rect x="833" y="755" width="3" height="5" fill="#d4cca8"/><rect x="833" y="757" width="3" height="1" fill="#806200"/><rect x="834" y="756" width="1" height="3" fill="#806200"/>
<rect x="838" y="764" width="5" height="3" fill="#d4cca8"/><rect x="839" y="763" width="3" height="5" fill="#d4cca8"/><rect x="839" y="765" width="3" height="1" fill="#806200"/><rect x="840" y="764" width="1" height="3" fill="#806200"/>
<rect x="849" y="763" width="5" height="3" fill="#d4cca8"/><rect x="850" y="762" width="3" height="5" fill="#d4cca8"/><rect x="850" y="764" width="3" height="1" fill="#806200"/><rect x="851" y="763" width="1" height="3" fill="#806200"/>
<rect x="687" y="695" width="5" height="3" fill="#d4cca8"/><rect x="688" y="694" width="3" height="5" fill="#d4cca8"/><rect x="688" y="696" width="3" height="1" fill="#806200"/><rect x="689" y="695" width="1" height="3" fill="#806200"/>
<rect x="716" y="701" width="5" height="3" fill="#d4cca8"/><rect x="717" y="700" width="3" height="5" fill="#d4cca8"/><rect x="717" y="702" width="3" height="1" fill="#806200"/><rect x="718" y="701" width="1" height="3" fill="#806200"/>
<rect x="697" y="668" width="5" height="3" fill="#d4cca8"/><rect x="698" y="667" width="3" height="5" fill="#d4cca8"/><rect x="698" y="669" width="3" height="1" fill="#806200"/><rect x="699" y="668" width="1" height="3" fill="#806200"/>
<rect x="688" y="688" width="5" height="3" fill="#d4cca8"/><rect x="689" y="687" width="3" height="5" fill="#d4cca8"/><rect x="689" y="689" width="3" height="1" fill="#806200"/><rect x="690" y="688" width="1" height="3" fill="#806200"/>
<rect x="714" y="659" width="5" height="3" fill="#d4cca8"/><rect x="715" y="658" width="3" height="5" fill="#d4cca8"/><rect x="715" y="660" width="3" height="1" fill="#806200"/><rect x="716" y="659" width="1" height="3" fill="#806200"/>
<rect x="746" y="707" width="5" height="3" fill="#d4cca8"/><rect x="747" y="706" width="3" height="5" fill="#d4cca8"/><rect x="747" y="708" width="3" height="1" fill="#806200"/><rect x="748" y="707" width="1" height="3" fill="#806200"/>
<rect x="638" y="746" width="5" height="3" fill="#d4cca8"/><rect x="639" y="745" width="3" height="5" fill="#d4cca8"/><rect x="639" y="747" width="3" height="1" fill="#806200"/><rect x="640" y="746" width="1" height="3" fill="#806200"/>
<rect x="658" y="767" width="5" height="3" fill="#d4cca8"/><rect x="659" y="766" width="3" height="5" fill="#d4cca8"/><rect x="659" y="768" width="3" height="1" fill="#806200"/><rect x="660" y="767" width="1" height="3" fill="#806200"/>
<rect x="611" y="692" width="5" height="3" fill="#d4cca8"/><rect x="612" y="691" width="3" height="5" fill="#d4cca8"/><rect x="612" y="693" width="3" height="1" fill="#806200"/><rect x="613" y="692" width="1" height="3" fill="#806200"/>
<rect x="618" y="689" width="5" height="3" fill="#d4cca8"/><rect x="619" y="688" width="3" height="5" fill="#d4cca8"/><rect x="619" y="690" width="3" height="1" fill="#806200"/><rect x="620" y="689" width="1" height="3" fill="#806200"/>
<rect x="624" y="692" width="5" height="3" fill="#d4cca8"/><rect x="625" y="691" width="3" height="5" fill="#d4cca8"/><rect x="625" y="693" width="3" height="1" fill="#806200"/><rect x="626" y="692" width="1" height="3" fill="#806200"/>
<rect x="629" y="701" width="5" height="3" fill="#d4cca8"/><rect x="630" y="700" width="3" height="5" fill="#d4cca8"/><rect x="630" y="702" width="3" height="1" fill="#806200"/><rect x="631" y="701" width="1" height="3" fill="#806200"/>
<rect x="630" y="724" width="5" height="3" fill="#d4cca8"/><rect x="631" y="723" width="3" height="5" fill="#d4cca8"/><rect x="631" y="725" width="3" height="1" fill="#806200"/><rect x="632" y="724" width="1" height="3" fill="#806200"/>
<rect x="572" y="588" width="5" height="3" fill="#d4cca8"/><rect x="573" y="587" width="3" height="5" fill="#d4cca8"/><rect x="573" y="589" width="3" height="1" fill="#806200"/><rect x="574" y="588" width="1" height="3" fill="#806200"/>
<rect x="576" y="593" width="5" height="3" fill="#d4cca8"/><rect x="577" y="592" width="3" height="5" fill="#d4cca8"/><rect x="577" y="594" width="3" height="1" fill="#806200"/><rect x="578" y="593" width="1" height="3" fill="#806200"/>
<rect x="566" y="613" width="5" height="3" fill="#d4cca8"/><rect x="567" y="612" width="3" height="5" fill="#d4cca8"/><rect x="567" y="614" width="3" height="1" fill="#806200"/><rect x="568" y="613" width="1" height="3" fill="#806200"/>
<rect x="561" y="620" width="5" height="3" fill="#d4cca8"/><rect x="562" y="619" width="3" height="5" fill="#d4cca8"/><rect x="562" y="621" width="3" height="1" fill="#806200"/><rect x="563" y="620" width="1" height="3" fill="#806200"/>
<rect x="588" y="693" width="5" height="3" fill="#d4cca8"/><rect x="589" y="692" width="3" height="5" fill="#d4cca8"/><rect x="589" y="694" width="3" height="1" fill="#806200"/><rect x="590" y="693" width="1" height="3" fill="#806200"/>
<rect x="585" y="659" width="5" height="3" fill="#d4cca8"/><rect x="586" y="658" width="3" height="5" fill="#d4cca8"/><rect x="586" y="660" width="3" height="1" fill="#806200"/><rect x="587" y="659" width="1" height="3" fill="#806200"/>
<rect x="610" y="730" width="5" height="3" fill="#d4cca8"/><rect x="611" y="729" width="3" height="5" fill="#d4cca8"/><rect x="611" y="731" width="3" height="1" fill="#806200"/><rect x="612" y="730" width="1" height="3" fill="#806200"/>
<rect x="693" y="613" width="5" height="3" fill="#d4cca8"/><rect x="694" y="612" width="3" height="5" fill="#d4cca8"/><rect x="694" y="614" width="3" height="1" fill="#806200"/><rect x="695" y="613" width="1" height="3" fill="#806200"/>
<rect x="713" y="651" width="5" height="3" fill="#d4cca8"/><rect x="714" y="650" width="3" height="5" fill="#d4cca8"/><rect x="714" y="652" width="3" height="1" fill="#806200"/><rect x="715" y="651" width="1" height="3" fill="#806200"/>
<rect x="669" y="649" width="5" height="3" fill="#d4cca8"/><rect x="670" y="648" width="3" height="5" fill="#d4cca8"/><rect x="670" y="650" width="3" height="1" fill="#806200"/><rect x="671" y="649" width="1" height="3" fill="#806200"/>
<rect x="582" y="523" width="5" height="3" fill="#d4cca8"/><rect x="583" y="522" width="3" height="5" fill="#d4cca8"/><rect x="583" y="524" width="3" height="1" fill="#806200"/><rect x="584" y="523" width="1" height="3" fill="#806200"/>
<rect x="610" y="513" width="5" height="3" fill="#d4cca8"/><rect x="611" y="512" width="3" height="5" fill="#d4cca8"/><rect x="611" y="514" width="3" height="1" fill="#806200"/><rect x="612" y="513" width="1" height="3" fill="#806200"/>
<rect x="598" y="522" width="5" height="3" fill="#d4cca8"/><rect x="599" y="521" width="3" height="5" fill="#d4cca8"/><rect x="599" y="523" width="3" height="1" fill="#806200"/><rect x="600" y="522" width="1" height="3" fill="#806200"/>
<rect x="603" y="518" width="5" height="3" fill="#d4cca8"/><rect x="604" y="517" width="3" height="5" fill="#d4cca8"/><rect x="604" y="519" width="3" height="1" fill="#806200"/><rect x="605" y="518" width="1" height="3" fill="#806200"/>
<rect x="609" y="518" width="5" height="3" fill="#d4cca8"/><rect x="610" y="517" width="3" height="5" fill="#d4cca8"/><rect x="610" y="519" width="3" height="1" fill="#806200"/><rect x="611" y="518" width="1" height="3" fill="#806200"/>
<rect x="608" y="539" width="5" height="3" fill="#d4cca8"/><rect x="609" y="538" width="3" height="5" fill="#d4cca8"/><rect x="609" y="540" width="3" height="1" fill="#806200"/><rect x="610" y="539" width="1" height="3" fill="#806200"/>
<rect x="666" y="537" width="5" height="3" fill="#d4cca8"/><rect x="667" y="536" width="3" height="5" fill="#d4cca8"/><rect x="667" y="538" width="3" height="1" fill="#806200"/><rect x="668" y="537" width="1" height="3" fill="#806200"/>
<rect x="642" y="556" width="5" height="3" fill="#d4cca8"/><rect x="643" y="555" width="3" height="5" fill="#d4cca8"/><rect x="643" y="557" width="3" height="1" fill="#806200"/><rect x="644" y="556" width="1" height="3" fill="#806200"/>
<rect x="613" y="568" width="5" height="3" fill="#d4cca8"/><rect x="614" y="567" width="3" height="5" fill="#d4cca8"/><rect x="614" y="569" width="3" height="1" fill="#806200"/><rect x="615" y="568" width="1" height="3" fill="#806200"/>
<rect x="619" y="566" width="5" height="3" fill="#d4cca8"/><rect x="620" y="565" width="3" height="5" fill="#d4cca8"/><rect x="620" y="567" width="3" height="1" fill="#806200"/><rect x="621" y="566" width="1" height="3" fill="#806200"/>
<rect x="587" y="496" width="5" height="3" fill="#d4cca8"/><rect x="588" y="495" width="3" height="5" fill="#d4cca8"/><rect x="588" y="497" width="3" height="1" fill="#806200"/><rect x="589" y="496" width="1" height="3" fill="#806200"/>
<rect x="582" y="500" width="5" height="3" fill="#d4cca8"/><rect x="583" y="499" width="3" height="5" fill="#d4cca8"/><rect x="583" y="501" width="3" height="1" fill="#806200"/><rect x="584" y="500" width="1" height="3" fill="#806200"/>
<rect x="576" y="505" width="5" height="3" fill="#d4cca8"/><rect x="577" y="504" width="3" height="5" fill="#d4cca8"/><rect x="577" y="506" width="3" height="1" fill="#806200"/><rect x="578" y="505" width="1" height="3" fill="#806200"/>
<rect x="570" y="504" width="5" height="3" fill="#d4cca8"/><rect x="571" y="503" width="3" height="5" fill="#d4cca8"/><rect x="571" y="505" width="3" height="1" fill="#806200"/><rect x="572" y="504" width="1" height="3" fill="#806200"/>
<rect x="995" y="171" width="5" height="5" fill="#d0c8a4"/><rect x="996" y="172" width="3" height="3" fill="#806200"/>
<rect x="1087" y="147" width="5" height="5" fill="#d0c8a4"/><rect x="1088" y="148" width="3" height="3" fill="#806200"/>
<rect x="1004" y="228" width="5" height="5" fill="#d0c8a4"/><rect x="1005" y="229" width="3" height="3" fill="#806200"/>
<rect x="1215" y="268" width="5" height="5" fill="#d0c8a4"/><rect x="1216" y="269" width="3" height="3" fill="#806200"/>
<rect x="1190" y="346" width="5" height="5" fill="#d0c8a4"/><rect x="1191" y="347" width="3" height="3" fill="#806200"/>
<rect x="1295" y="316" width="5" height="5" fill="#d0c8a4"/><rect x="1296" y="317" width="3" height="3" fill="#806200"/>
<rect x="1333" y="386" width="5" height="5" fill="#d0c8a4"/><rect x="1334" y="387" width="3" height="3" fill="#806200"/>
<rect x="1322" y="456" width="5" height="5" fill="#d0c8a4"/><rect x="1323" y="457" width="3" height="3" fill="#806200"/>
<rect x="1252" y="700" width="5" height="5" fill="#d0c8a4"/><rect x="1253" y="701" width="3" height="3" fill="#806200"/>
<rect x="1227" y="706" width="5" height="5" fill="#d0c8a4"/><rect x="1228" y="707" width="3" height="3" fill="#806200"/>
<rect x="1236" y="686" width="5" height="5" fill="#d0c8a4"/><rect x="1237" y="687" width="3" height="3" fill="#806200"/>
<rect x="1146" y="716" width="5" height="5" fill="#d0c8a4"/><rect x="1147" y="717" width="3" height="3" fill="#806200"/>
<rect x="661" y="302" width="5" height="5" fill="#d0c8a4"/><rect x="662" y="303" width="3" height="3" fill="#806200"/>
<rect x="649" y="333" width="5" height="5" fill="#d0c8a4"/><rect x="650" y="334" width="3" height="3" fill="#806200"/>
<rect x="644" y="385" width="5" height="5" fill="#d0c8a4"/><rect x="645" y="386" width="3" height="3" fill="#806200"/>
<rect x="644" y="391" width="5" height="5" fill="#d0c8a4"/><rect x="645" y="392" width="3" height="3" fill="#806200"/>
<rect x="681" y="331" width="5" height="5" fill="#d0c8a4"/><rect x="682" y="332" width="3" height="3" fill="#806200"/>
<rect x="587" y="363" width="5" height="5" fill="#d0c8a4"/><rect x="588" y="364" width="3" height="3" fill="#806200"/>
<rect x="583" y="374" width="5" height="5" fill="#d0c8a4"/><rect x="584" y="375" width="3" height="3" fill="#806200"/>
<rect x="603" y="380" width="5" height="5" fill="#d0c8a4"/><rect x="604" y="381" width="3" height="3" fill="#806200"/>
<rect x="537" y="444" width="5" height="5" fill="#d0c8a4"/><rect x="538" y="445" width="3" height="3" fill="#806200"/>
<rect x="535" y="456" width="5" height="5" fill="#d0c8a4"/><rect x="536" y="457" width="3" height="3" fill="#806200"/>
<rect x="531" y="467" width="5" height="5" fill="#d0c8a4"/><rect x="532" y="468" width="3" height="3" fill="#806200"/>
<rect x="591" y="489" width="5" height="5" fill="#d0c8a4"/><rect x="592" y="490" width="3" height="3" fill="#806200"/>
<rect x="591" y="500" width="5" height="5" fill="#d0c8a4"/><rect x="592" y="501" width="3" height="3" fill="#806200"/>
<rect x="585" y="506" width="5" height="5" fill="#d0c8a4"/><rect x="586" y="507" width="3" height="3" fill="#806200"/>
<rect x="579" y="510" width="5" height="5" fill="#d0c8a4"/><rect x="580" y="511" width="3" height="3" fill="#806200"/>
<rect x="688" y="595" width="5" height="5" fill="#d0c8a4"/><rect x="689" y="596" width="3" height="3" fill="#806200"/>
<rect x="703" y="634" width="5" height="5" fill="#d0c8a4"/><rect x="704" y="635" width="3" height="3" fill="#806200"/>
<rect x="669" y="636" width="5" height="5" fill="#d0c8a4"/><rect x="670" y="637" width="3" height="3" fill="#806200"/>
<rect x="684" y="456" width="5" height="5" fill="#d0c8a4"/><rect x="685" y="457" width="3" height="3" fill="#806200"/>
<rect x="678" y="498" width="5" height="5" fill="#d0c8a4"/><rect x="679" y="499" width="3" height="3" fill="#806200"/>
<rect x="646" y="521" width="5" height="5" fill="#d0c8a4"/><rect x="647" y="522" width="3" height="3" fill="#806200"/>
<rect x="668" y="543" width="5" height="5" fill="#d0c8a4"/><rect x="669" y="544" width="3" height="3" fill="#806200"/>
<rect x="667" y="558" width="5" height="5" fill="#d0c8a4"/><rect x="668" y="559" width="3" height="3" fill="#806200"/>
<rect x="667" y="570" width="5" height="5" fill="#d0c8a4"/><rect x="668" y="571" width="3" height="3" fill="#806200"/>
<rect x="665" y="334" width="5" height="5" fill="#d0c8a4"/><rect x="666" y="335" width="3" height="3" fill="#806200"/>
<rect x="571" y="374" width="5" height="5" fill="#d0c8a4"/><rect x="572" y="375" width="3" height="3" fill="#806200"/>
<rect x="956" y="101.5" width="10.5" height="11" fill="#ff0000"/>
<rect x="955.2" y="101.2" width="30.8" height="11.6" fill="none" stroke="#ffff00" stroke-width="1.6" rx="0"/>
<rect x="983" y="101" width="1.2" height="12" fill="#ffff00"/>
<rect x="964.3" y="119.3" width="4.7" height="1.2" fill="#ffff00"/>
<rect x="1022.75" y="127.55" width="12.5" height="25.7" fill="none" stroke="#ffff00" stroke-width="2.5" rx="0"/>
<polygon points="1083,116.6 1112.5,127.5 1107.8,139.5 1078.4,128.1" fill="none" stroke="#ffff00" stroke-width="2"/>
<polyline points="1108.5,126 1103.8,138" fill="none" stroke="#ffff00" stroke-width="1.2"/>
<polygon points="1188.2,167.5 1212.5,186.9 1203.7,197.6 1179.4,177.2" fill="none" stroke="#ffff00" stroke-width="2"/>
<polyline points="1209.5,184.5 1200.7,195.2" fill="none" stroke="#ffff00" stroke-width="1.2"/>
<rect x="1196.85" y="251.35" width="11.9" height="24.7" fill="none" stroke="#ffff00" stroke-width="2.5" rx="0"/>
<polygon points="1300.9,284 1320.1,308.3 1309,316.7 1290.5,291.7" fill="none" stroke="#ffff00" stroke-width="2"/>
<polyline points="1318,305.6 1307,314" fill="none" stroke="#ffff00" stroke-width="1.2"/>
<rect x="1348.3" y="421.4" width="11.6" height="30.2" fill="none" stroke="#ffff00" stroke-width="1.6" rx="0"/>
<rect x="1348" y="448.6" width="12" height="1.2" fill="#ffff00"/>
<rect x="1340.5" y="431" width="1.2" height="4.7" fill="#ffff00"/>
<rect x="1321.85" y="500.45" width="25.3" height="11.6" fill="none" stroke="#ffff00" stroke-width="2.5" rx="0"/>
<rect x="1348.3" y="570.6" width="12.2" height="30.1" fill="none" stroke="#ffff00" stroke-width="1.6" rx="0"/>
<rect x="1348" y="597.5" width="13" height="1.2" fill="#ffff00"/>
<rect x="1340.5" y="578.6" width="1.2" height="4.6" fill="#ffff00"/>
<rect x="1245.95" y="611.25" width="12.1" height="23.7" fill="none" stroke="#ffff00" stroke-width="2.5" rx="0"/>
<rect x="1261.2" y="606.9" width="12.8" height="29.7" fill="none" stroke="#ffff00" stroke-width="1.6" rx="0"/>
<rect x="1261" y="608.2" width="13" height="1.2" fill="#ffff00"/>
<rect x="1279" y="622.3" width="1.2" height="5.8" fill="#ffff00"/>
<rect x="1236.25" y="659.85" width="11.8" height="24.9" fill="none" stroke="#ffff00" stroke-width="2.5" rx="0"/>
<rect x="1255.25" y="655.95" width="36.8" height="30.6" fill="none" stroke="#ffff00" stroke-width="2.5" rx="0"/>
<rect x="1225.7" y="665.6" width="2.3" height="4.6" fill="#ffff00"/>
<rect x="1236.25" y="719.15" width="11.8" height="24.6" fill="none" stroke="#ffff00" stroke-width="2.5" rx="0"/>
<polygon points="1308.3,706.8 1317.8,713.7 1298.6,739.2 1288.7,731.8" fill="none" stroke="#ffff00" stroke-width="2"/>
<polyline points="1306.4,709.2 1316,716.1" fill="none" stroke="#ffff00" stroke-width="1.2"/>
<polyline points="1162.7,724.5 1162.7,712.6 1174.7,712.6 1174.7,724.5" fill="none" stroke="#ffff00" stroke-width="1.6"/>
<polyline points="1162.7,735.7 1162.7,746.2 1174.7,746.2 1174.7,735.7" fill="none" stroke="#ffff00" stroke-width="1.6"/>
<polygon points="1164.7,727.7 1173.7,727.7 1169.2,733.4" fill="none" stroke="#ffff00" stroke-width="1.2"/>
<rect x="1164.7" y="733.2" width="9" height="1.2" fill="#ffff00"/>
<polyline points="1179.4,724.5 1179.4,712.6 1191.4,712.6 1191.4,724.5" fill="none" stroke="#ffff00" stroke-width="1.6"/>
<polyline points="1179.4,735.7 1179.4,746.2 1191.4,746.2 1191.4,735.7" fill="none" stroke="#ffff00" stroke-width="1.6"/>
<polygon points="1181.4,727.7 1190.4,727.7 1185.9,733.4" fill="none" stroke="#ffff00" stroke-width="1.2"/>
<rect x="1181.4" y="733.2" width="9" height="1.2" fill="#ffff00"/>
<rect x="1150.15" y="750.85" width="23.4" height="30.9" fill="none" stroke="#ffff00" stroke-width="2.5" rx="0"/>
<rect x="1180.65" y="750.15" width="25.3" height="31.6" fill="none" stroke="#ffff00" stroke-width="2.5" rx="0"/>
<rect x="1149" y="762.5" width="25" height="1.8" fill="#ffff00"/>
<rect x="1180" y="763.5" width="27" height="1.8" fill="#ffff00"/>
<polygon points="703.2,176.6 717.1,173.1 725.2,200.9 711.3,206.7" fill="none" stroke="#ffff00" stroke-width="2"/>
<polyline points="710.3,203.3 724,197.5" fill="none" stroke="#ffff00" stroke-width="1.2"/>
<polygon points="710.8,215.3 724,208.3 736.8,232.2 724,239.8" fill="none" stroke="#ffff00" stroke-width="2"/>
<polygon points="639.5,242.1 650,250 632.6,275.5 621.5,268" fill="none" stroke="#ffff00" stroke-width="2"/>
<polyline points="623.5,265.3 634.5,272.8" fill="none" stroke="#ffff00" stroke-width="1.2"/>
<polyline points="699,186 701,192" fill="none" stroke="#ffff00" stroke-width="1.6"/>
<polyline points="717.5,217 719,220" fill="none" stroke="#ffff00" stroke-width="1.6"/>
<polyline points="646.5,260 645.5,264" fill="none" stroke="#ffff00" stroke-width="1.6"/>
<rect x="670.2" y="268.2" width="17.3" height="46" fill="none" stroke="#ffff00" stroke-width="1.2" rx="2"/>
<rect x="676.85" y="292" width="4" height="1.4" fill="#ffff00"/>
<rect x="690.6" y="268.2" width="16.8" height="46" fill="none" stroke="#ffff00" stroke-width="1.2" rx="2"/>
<rect x="697" y="292" width="4" height="1.4" fill="#ffff00"/>
<rect x="710.7" y="268.2" width="16.7" height="46" fill="none" stroke="#ffff00" stroke-width="1.2" rx="2"/>
<rect x="717.05" y="292" width="4" height="1.4" fill="#ffff00"/>
<rect x="730.9" y="268.2" width="17.3" height="46" fill="none" stroke="#ffff00" stroke-width="1.2" rx="2"/>
<rect x="737.55" y="292" width="4" height="1.4" fill="#ffff00"/>
<polyline points="627.1,290.5 649,290.5" fill="none" stroke="#ffff00" stroke-width="1.2"/>
<polyline points="630,323.5 649,323.5" fill="none" stroke="#ffff00" stroke-width="1.2"/>
<polyline points="619.7,345 619.7,330.2 588.5,330.2 588.5,345" fill="none" stroke="#ffff00" stroke-width="1.3"/>
<polyline points="588.5,349 588.5,363.3 600,363.3" fill="none" stroke="#ffff00" stroke-width="1.3"/>
<polyline points="608,363.3 619.7,363.3 619.7,349" fill="none" stroke="#ffff00" stroke-width="1.3"/>
<rect x="588.5" y="345.5" width="12.5" height="2.8" fill="#ffff00"/>
<rect x="607.5" y="345.5" width="12.2" height="2.8" fill="#ffff00"/>
<rect x="588" y="363" width="12" height="1.6" fill="#ffff00"/>
<rect x="608" y="363" width="12" height="1.6" fill="#ffff00"/>
<rect x="632.2" y="354" width="1.6" height="18" fill="#ffff00"/>
<rect x="665.3" y="355" width="1.5" height="17" fill="#ffff00"/>
<polyline points="599.3,382 599.3,421.6" fill="none" stroke="#ffff00" stroke-width="1.2"/>
<polyline points="612.4,382 612.4,421.6" fill="none" stroke="#ffff00" stroke-width="1.2"/>
<rect x="599.9" y="390.1" width="11.2" height="14.3" fill="none" stroke="#ffff00" stroke-width="1.2" rx="0"/>
<rect x="619.2" y="390.1" width="11.2" height="14.3" fill="none" stroke="#ffff00" stroke-width="1.2" rx="0"/>
<rect x="599.9" y="405.6" width="11.2" height="15.4" fill="none" stroke="#ffff00" stroke-width="1.2" rx="0"/>
<rect x="619.2" y="405.6" width="11.2" height="15.4" fill="none" stroke="#ffff00" stroke-width="1.2" rx="0"/>
<rect x="599.9" y="424.6" width="11.2" height="14.2" fill="none" stroke="#ffff00" stroke-width="1.2" rx="0"/>
<rect x="619.2" y="424.6" width="11.2" height="14.2" fill="none" stroke="#ffff00" stroke-width="1.2" rx="0"/>
<rect x="599.9" y="440" width="11.2" height="15.8" fill="none" stroke="#ffff00" stroke-width="1.2" rx="0"/>
<rect x="619.2" y="440" width="11.2" height="15.8" fill="none" stroke="#ffff00" stroke-width="1.2" rx="0"/>
<rect x="599.9" y="457" width="11.2" height="13.4" fill="none" stroke="#ffff00" stroke-width="1.2" rx="0"/>
<rect x="619.2" y="457" width="11.2" height="13.4" fill="none" stroke="#ffff00" stroke-width="1.2" rx="0"/>
<rect x="599.5" y="404.3" width="12" height="1.5" fill="#ffff00"/>
<rect x="618.6" y="404.3" width="12.4" height="1.5" fill="#ffff00"/>
<rect x="618.6" y="438.3" width="12.4" height="2" fill="#ffff00"/>
<rect x="618.6" y="455.3" width="12.4" height="2" fill="#ffff00"/>
<rect x="633.9" y="404.8" width="21.1" height="46.3" fill="none" stroke="#ffff00" stroke-width="1.2" rx="0"/>
<rect x="582.3" y="398" width="7" height="2.2" fill="#ffff00"/>
<rect x="582.3" y="414.5" width="7" height="2.2" fill="#ffff00"/>
<rect x="582.3" y="433.5" width="7" height="2.2" fill="#ffff00"/>
<rect x="582.3" y="450" width="7" height="2.2" fill="#ffff00"/>
<rect x="582.3" y="464.7" width="7" height="2.2" fill="#ffff00"/>
<rect x="607.5" y="432" width="7.5" height="2.6" fill="#ffff00"/>
<rect x="607.5" y="449" width="7.5" height="2.6" fill="#ffff00"/>
<rect x="607.5" y="465" width="7.5" height="2.6" fill="#ffff00"/>
<rect x="616.5" y="393.5" width="7" height="2.4" fill="#ffff00"/>
<rect x="617" y="410" width="7" height="2.4" fill="#ffff00"/>
<rect x="582.8" y="529.6" width="11.7" height="24.9" fill="none" stroke="#ffff00" stroke-width="2.2" rx="0"/>
<rect x="582.8" y="559.4" width="25.6" height="12.3" fill="none" stroke="#ffff00" stroke-width="2.2" rx="0"/>
<polyline points="597.9,532.6 597.9,521.6 610.2,521.6 610.2,532.6" fill="none" stroke="#ffff00" stroke-width="1.8"/>
<polyline points="597.9,544.6 597.9,555.6 610.2,555.6 610.2,544.6" fill="none" stroke="#ffff00" stroke-width="1.8"/>
<polygon points="598.9,534.6 609.2,534.6 604.05,541.6" fill="none" stroke="#ffff00" stroke-width="1.3"/>
<rect x="598.9" y="541.6" width="10.3" height="1.4" fill="#ffff00"/>
<polyline points="655.8,529.5 655.8,518.5 667.3,518.5 667.3,529.5" fill="none" stroke="#ffff00" stroke-width="1.8"/>
<polyline points="655.8,542.2 655.8,553.2 667.3,553.2 667.3,542.2" fill="none" stroke="#ffff00" stroke-width="1.8"/>
<polygon points="656.8,531.85 666.3,531.85 661.55,538.85" fill="none" stroke="#ffff00" stroke-width="1.3"/>
<rect x="656.8" y="538.85" width="9.5" height="1.4" fill="#ffff00"/>
<rect x="639.9" y="526.6" width="11.7" height="25.5" fill="none" stroke="#ffff00" stroke-width="2.2" rx="0"/>
<rect x="673.1" y="518.8" width="11.7" height="24.9" fill="none" stroke="#ffff00" stroke-width="2.2" rx="0"/>
<rect x="639.9" y="557.4" width="25.6" height="11.7" fill="none" stroke="#ffff00" stroke-width="2.2" rx="0"/>
<rect x="673.1" y="548.2" width="11.7" height="24.8" fill="none" stroke="#ffff00" stroke-width="2.2" rx="0"/>
<rect x="673.1" y="578.3" width="12.4" height="24" fill="none" stroke="#ffff00" stroke-width="2.2" rx="0"/>
<rect x="618.3" y="578.3" width="11.7" height="24.8" fill="none" stroke="#ffff00" stroke-width="2.2" rx="0"/>
<rect x="580.5" y="598" width="29.9" height="14.8" fill="none" stroke="#ffff00" stroke-width="2.2" rx="0"/>
<circle cx="601" cy="606.8" r="5.6" fill="#ffff00" shape-rendering="auto"/>
<rect x="636.8" y="598" width="30.2" height="14.3" fill="none" stroke="#ffff00" stroke-width="2.2" rx="0"/>
<circle cx="657.3" cy="606.8" r="5.6" fill="#ffff00" shape-rendering="auto"/>
<rect x="673.1" y="607.6" width="12.4" height="25.7" fill="none" stroke="#ffff00" stroke-width="2.2" rx="0"/>
<rect x="617.5" y="607.6" width="13.3" height="25.7" fill="none" stroke="#ffff00" stroke-width="2.2" rx="0"/>
<polygon points="549.3,575.2 561.6,573.8 566.3,602.6 554.4,606.5" fill="none" stroke="#ffff00" stroke-width="2"/>
<polyline points="553.6,602.2 565.6,598.6" fill="none" stroke="#ffff00" stroke-width="1.4"/>
<polygon points="559.9,393.7 572.7,397.4 564.6,427.5 551.5,423.8" fill="none" stroke="#ffff00" stroke-width="2"/>
<polyline points="560.5,397.4 571.5,400.6" fill="none" stroke="#ffff00" stroke-width="1.3"/>
<polyline points="574,415.3 572,420.5" fill="none" stroke="#ffff00" stroke-width="1.6"/>
<rect x="580.9" y="642.1" width="25.1" height="12.7" fill="none" stroke="#ffff00" stroke-width="2.4" rx="2"/>
<rect x="575.9" y="665.9" width="25.5" height="12.1" fill="none" stroke="#ffff00" stroke-width="2.2" rx="0"/>
<rect x="637.7" y="642.8" width="25.7" height="12.3" fill="none" stroke="#ffff00" stroke-width="2.4" rx="2"/>
<polyline points="628,687 628,674.8 612.6,674.8 612.6,704.9 628,704.9 628,693" fill="none" stroke="#ffff00" stroke-width="1.2"/>
<polyline points="636.5,670 636.5,662.4 669.7,662.4" fill="none" stroke="#ffff00" stroke-width="2"/>
<polyline points="636.5,694 636.5,702.6 669.7,702.6" fill="none" stroke="#ffff00" stroke-width="2"/>
<rect x="637.8" y="710.5" width="12.7" height="25.7" fill="none" stroke="#ffff00" stroke-width="2.4" rx="0"/>
<rect x="656.7" y="710.5" width="12.8" height="25.7" fill="none" stroke="#ffff00" stroke-width="2.4" rx="0"/>
<rect x="674.2" y="710.5" width="11.2" height="26.1" fill="none" stroke="#ffff00" stroke-width="2.4" rx="0"/>
<rect x="690.1" y="710.5" width="11.3" height="24.2" fill="none" stroke="#ffff00" stroke-width="2.4" rx="0"/>
<rect x="704.5" y="710.5" width="12" height="24.2" fill="none" stroke="#ffff00" stroke-width="2.4" rx="0"/>
<polygon points="676.5,722 684,722 681.5,726.5 679,726.5" fill="#ffff00"/>
<rect x="656.1" y="738.7" width="33" height="12.5" fill="none" stroke="#ffff00" stroke-width="1.2" rx="0"/>
<rect x="690.1" y="738.6" width="26.4" height="12.7" fill="none" stroke="#ffff00" stroke-width="2.4" rx="0"/>
<polygon points="670.5,740.5 670.5,749.5 676,745" fill="none" stroke="#ffff00" stroke-width="1.2"/>
<rect x="676" y="740" width="1.2" height="10" fill="#ffff00"/>
<rect x="713.2" y="762.9" width="25.3" height="25.9" fill="none" stroke="#ffff00" stroke-width="2.4" rx="0"/>
<rect x="736.8" y="731.8" width="11.6" height="24.9" fill="none" stroke="#ffff00" stroke-width="2.4" rx="0"/>
<rect x="753.1" y="731.8" width="12.8" height="24.9" fill="none" stroke="#ffff00" stroke-width="2.4" rx="0"/>
<polyline points="691.2,681 691.2,669.4 707.1,669.4 707.1,681" fill="none" stroke="#ffff00" stroke-width="1.4"/>
<polyline points="691.2,688 691.2,700.7 707.1,700.7 707.1,688" fill="none" stroke="#ffff00" stroke-width="1.4"/>
<rect x="721.5" y="700.2" width="2.3" height="6.8" fill="#ffff00"/>
<rect x="730.6" y="700.2" width="2" height="4.8" fill="#ffff00"/>
<rect x="740.5" y="700.2" width="2.3" height="6.8" fill="#ffff00"/>
<rect x="750.4" y="700.2" width="2.2" height="6.8" fill="#ffff00"/>
<polyline points="694.7,633 697.8,633 694.7,638.6 697.8,638.6" fill="none" stroke="#ffff00" stroke-width="1.3"/>
<rect x="694.9" y="601.1" width="1.8" height="5.1" fill="none" stroke="#ffff00" stroke-width="1" rx="0"/>
<rect x="687.2" y="568" width="2.1" height="5.1" fill="none" stroke="#ffff00" stroke-width="1" rx="0"/>
<polygon points="624.9,728.6 643.1,753.8 632.8,762 614.9,735.9" fill="none" stroke="#ffff00" stroke-width="1.6"/>
<polyline points="641,750.6 630.6,758.6" fill="none" stroke="#ffff00" stroke-width="1.2"/>
<polyline points="771,746.5 771,737 774,734 777.2,734" fill="none" stroke="#ffff00" stroke-width="3"/>
<polyline points="794.6,733.8 800.4,733.8 800.4,746.8" fill="none" stroke="#ffff00" stroke-width="2.6"/>
<polyline points="770,790 770,766.7 781,766.7 784,770.5 789,770.5 792,766.7 802.5,766.7 802.5,790" fill="none" stroke="#ffff00" stroke-width="2.2"/>
<rect x="843.5" y="767" width="25.9" height="21.9" fill="none" stroke="#ffff00" stroke-width="2.2" rx="0"/>
<circle cx="786" cy="757.1" r="2.2" fill="#ffff00" shape-rendering="auto"/><circle cx="757.5" cy="762.9" r="2.5" fill="#ffff00" shape-rendering="auto"/>
<text x="604.3" y="337.6" font-family="Liberation Sans, sans-serif" font-weight="bold" font-size="4.5" fill="#ffff00" stroke="#ffff00" stroke-width="0.3" textLength="8.1" lengthAdjust="spacingAndGlyphs">C31</text>
<text x="604.3" y="354.1" font-family="Liberation Sans, sans-serif" font-weight="bold" font-size="4.5" fill="#ffff00" stroke="#ffff00" stroke-width="0.3" textLength="8.1" lengthAdjust="spacingAndGlyphs">C32</text>
<text x="594.7" y="329.4" font-family="Liberation Sans, sans-serif" font-weight="bold" font-size="4.5" fill="#ffff00" stroke="#ffff00" stroke-width="0.3" textLength="6.9" lengthAdjust="spacingAndGlyphs">C30</text>
<text transform="translate(609.4,307.8) rotate(90)" x="0" y="0" font-family="Liberation Sans, sans-serif" font-weight="bold" font-size="4.5" fill="#ffff00" stroke="#ffff00" stroke-width="0.3" textLength="7.7" lengthAdjust="spacingAndGlyphs">a6</text>
<text transform="translate(582,355.6) rotate(90)" x="0" y="0" font-family="Liberation Sans, sans-serif" font-weight="bold" font-size="4.5" fill="#ffff00" stroke="#ffff00" stroke-width="0.3" textLength="5.4" lengthAdjust="spacingAndGlyphs">g</text>
<text x="641.3" y="336.3" font-family="Liberation Sans, sans-serif" font-weight="bold" font-size="5.32" fill="#ffff00" stroke="#ffff00" stroke-width="0.3" textLength="4.6" lengthAdjust="spacingAndGlyphs">Q</text>
<text transform="translate(668.8,357.9) rotate(90)" x="0" y="0" font-family="Liberation Sans, sans-serif" font-weight="bold" font-size="4.5" fill="#ffff00" stroke="#ffff00" stroke-width="0.3" textLength="3.9" lengthAdjust="spacingAndGlyphs">R</text>
<text x="675.4" y="382" font-family="Liberation Sans, sans-serif" font-weight="bold" font-size="4.5" fill="#ffff00" stroke="#ffff00" stroke-width="0.3" textLength="4.5" lengthAdjust="spacingAndGlyphs">r-</text>
<text x="616.3" y="396.5" font-family="Liberation Sans, sans-serif" font-weight="bold" font-size="4.5" fill="#ffff00" stroke="#ffff00" stroke-width="0.3" textLength="6.9" lengthAdjust="spacingAndGlyphs">C37</text>
<text x="672.5" y="294" font-family="Liberation Sans, sans-serif" font-weight="bold" font-size="4.5" fill="#ffff00" stroke="#ffff00" stroke-width="0.3" textLength="4" lengthAdjust="spacingAndGlyphs">Q</text>
<text x="582.3" y="400.5" font-family="Liberation Sans, sans-serif" font-weight="bold" font-size="4.5" fill="#ffff00" stroke="#ffff00" stroke-width="0.3" textLength="7" lengthAdjust="spacingAndGlyphs">C38</text>
<text x="582.3" y="417" font-family="Liberation Sans, sans-serif" font-weight="bold" font-size="4.5" fill="#ffff00" stroke="#ffff00" stroke-width="0.3" textLength="7" lengthAdjust="spacingAndGlyphs">C39</text>
<text x="582.3" y="436" font-family="Liberation Sans, sans-serif" font-weight="bold" font-size="4.5" fill="#ffff00" stroke="#ffff00" stroke-width="0.3" textLength="7" lengthAdjust="spacingAndGlyphs">C40</text>
<text x="582.3" y="452.5" font-family="Liberation Sans, sans-serif" font-weight="bold" font-size="4.5" fill="#ffff00" stroke="#ffff00" stroke-width="0.3" textLength="7" lengthAdjust="spacingAndGlyphs">C43</text>
<text x="582.3" y="467.2" font-family="Liberation Sans, sans-serif" font-weight="bold" font-size="4.5" fill="#ffff00" stroke="#ffff00" stroke-width="0.3" textLength="7" lengthAdjust="spacingAndGlyphs">C33</text>
<text x="607" y="434.8" font-family="Liberation Sans, sans-serif" font-weight="bold" font-size="4.76" fill="#ffff00" stroke="#ffff00" stroke-width="0.3" textLength="7.8" lengthAdjust="spacingAndGlyphs">C40</text>
<text x="606.3" y="452.5" font-family="Liberation Sans, sans-serif" font-weight="bold" font-size="4.5" fill="#ffff00" stroke="#ffff00" stroke-width="0.3" textLength="8.5" lengthAdjust="spacingAndGlyphs">C41</text>
<text x="607" y="467.5" font-family="Liberation Sans, sans-serif" font-weight="bold" font-size="4.5" fill="#ffff00" stroke="#ffff00" stroke-width="0.3" textLength="7.8" lengthAdjust="spacingAndGlyphs">C42</text>
<text x="616.3" y="413.1" font-family="Liberation Sans, sans-serif" font-weight="bold" font-size="5.32" fill="#ffff00" stroke="#ffff00" stroke-width="0.3" textLength="7.7" lengthAdjust="spacingAndGlyphs">2d</text>
<text transform="translate(643.8,427.8) rotate(90)" x="0" y="0" font-family="Liberation Sans, sans-serif" font-weight="bold" font-size="5.74" fill="#ffff00" stroke="#ffff00" stroke-width="0.3" textLength="6.2" lengthAdjust="spacingAndGlyphs">R</text>
<text transform="translate(661.8,429.4) rotate(90)" x="0" y="0" font-family="Liberation Sans, sans-serif" font-weight="bold" font-size="5.46" fill="#ffff00" stroke="#ffff00" stroke-width="0.3" textLength="5.4" lengthAdjust="spacingAndGlyphs">R</text>
<text transform="translate(601.3,508.5) rotate(90)" x="0" y="0" font-family="Liberation Sans, sans-serif" font-weight="bold" font-size="4.5" fill="#ffff00" stroke="#ffff00" stroke-width="0.3" textLength="4.2" lengthAdjust="spacingAndGlyphs">8</text>
<text transform="translate(585.6,511.1) rotate(90)" x="0" y="0" font-family="Liberation Sans, sans-serif" font-weight="bold" font-size="4.5" fill="#ffff00" stroke="#ffff00" stroke-width="0.3" textLength="5.9" lengthAdjust="spacingAndGlyphs">CC</text>
<text transform="translate(588.3,541.7) rotate(90)" x="0" y="0" font-family="Liberation Sans, sans-serif" font-weight="bold" font-size="4.76" fill="#ffff00" stroke="#ffff00" stroke-width="0.3" textLength="8" lengthAdjust="spacingAndGlyphs">R2</text>
<text x="587.1" y="568.9" font-family="Liberation Sans, sans-serif" font-weight="bold" font-size="4.62" fill="#ffff00" stroke="#ffff00" stroke-width="0.3" textLength="8" lengthAdjust="spacingAndGlyphs">C22</text>
<text x="563.6" y="568.9" font-family="Liberation Sans, sans-serif" font-weight="bold" font-size="4.62" fill="#ffff00" stroke="#ffff00" stroke-width="0.3" textLength="7.3" lengthAdjust="spacingAndGlyphs">C62</text>
<text transform="translate(633.4,540.9) rotate(90)" x="0" y="0" font-family="Liberation Sans, sans-serif" font-weight="bold" font-size="4.5" fill="#ffff00" stroke="#ffff00" stroke-width="0.3" textLength="6.2" lengthAdjust="spacingAndGlyphs">R</text>
<text transform="translate(645.7,539.8) rotate(90)" x="0" y="0" font-family="Liberation Sans, sans-serif" font-weight="bold" font-size="4.76" fill="#ffff00" stroke="#ffff00" stroke-width="0.3" textLength="8" lengthAdjust="spacingAndGlyphs">R1</text>
<text x="645.7" y="566.7" font-family="Liberation Sans, sans-serif" font-weight="bold" font-size="4.76" fill="#ffff00" stroke="#ffff00" stroke-width="0.3" textLength="7.8" lengthAdjust="spacingAndGlyphs">C55</text>
<text transform="translate(675.1,523.1) rotate(90)" x="0" y="0" font-family="Liberation Sans, sans-serif" font-weight="bold" font-size="4.76" fill="#ffff00" stroke="#ffff00" stroke-width="0.3" textLength="7.8" lengthAdjust="spacingAndGlyphs">R22</text>
<text transform="translate(676.3,552.5) rotate(90)" x="0" y="0" font-family="Liberation Sans, sans-serif" font-weight="bold" font-size="4.76" fill="#ffff00" stroke="#ffff00" stroke-width="0.3" textLength="7.7" lengthAdjust="spacingAndGlyphs">R4</text>
<text transform="translate(675.8,583.3) rotate(90)" x="0" y="0" font-family="Liberation Sans, sans-serif" font-weight="bold" font-size="4.5" fill="#ffff00" stroke="#ffff00" stroke-width="0.3" textLength="8.5" lengthAdjust="spacingAndGlyphs">R27</text>
<text transform="translate(676.3,610.3) rotate(90)" x="0" y="0" font-family="Liberation Sans, sans-serif" font-weight="bold" font-size="4.76" fill="#ffff00" stroke="#ffff00" stroke-width="0.3" textLength="7.7" lengthAdjust="spacingAndGlyphs">R45</text>
<text transform="translate(621.8,585.6) rotate(90)" x="0" y="0" font-family="Liberation Sans, sans-serif" font-weight="bold" font-size="4.5" fill="#ffff00" stroke="#ffff00" stroke-width="0.3" textLength="7.8" lengthAdjust="spacingAndGlyphs">C6</text>
<text x="567" y="618.5" font-family="Liberation Sans, sans-serif" font-weight="bold" font-size="4.5" fill="#ffff00" stroke="#ffff00" stroke-width="0.3" textLength="3.4" lengthAdjust="spacingAndGlyphs">U</text>
<text x="656.5" y="515.4" font-family="Liberation Sans, sans-serif" font-weight="bold" font-size="5.32" fill="#ffff00" stroke="#ffff00" stroke-width="0.3" textLength="4.7" lengthAdjust="spacingAndGlyphs">C4</text>
<text transform="translate(679.4,508.5) rotate(90)" x="0" y="0" font-family="Liberation Sans, sans-serif" font-weight="bold" font-size="4.5" fill="#ffff00" stroke="#ffff00" stroke-width="0.3" textLength="6.2" lengthAdjust="spacingAndGlyphs">5</text>
<text x="616.4" y="574.9" font-family="Liberation Sans, sans-serif" font-weight="bold" font-size="4.5" fill="#ffff00" stroke="#ffff00" stroke-width="0.3" textLength="6.2" lengthAdjust="spacingAndGlyphs">C</text>
<text transform="translate(621.4,612.7) rotate(90)" x="0" y="0" font-family="Liberation Sans, sans-serif" font-weight="bold" font-size="4.5" fill="#ffff00" stroke="#ffff00" stroke-width="0.3" textLength="5.4" lengthAdjust="spacingAndGlyphs">6</text>
<text x="587.1" y="653.1" font-family="Liberation Sans, sans-serif" font-weight="bold" font-size="4.62" fill="#ffff00" stroke="#ffff00" stroke-width="0.3" textLength="6.9" lengthAdjust="spacingAndGlyphs">R41</text>
<text x="580.2" y="675.8" font-family="Liberation Sans, sans-serif" font-weight="bold" font-size="4.62" fill="#ffff00" stroke="#ffff00" stroke-width="0.3" textLength="7.7" lengthAdjust="spacingAndGlyphs">R39</text>
<text transform="translate(575.5,647) rotate(90)" x="0" y="0" font-family="Liberation Sans, sans-serif" font-weight="bold" font-size="4.5" fill="#ffff00" stroke="#ffff00" stroke-width="0.3" textLength="6.2" lengthAdjust="spacingAndGlyphs">S</text>
<text x="583.2" y="689.8" font-family="Liberation Sans, sans-serif" font-weight="bold" font-size="4.5" fill="#ffff00" stroke="#ffff00" stroke-width="0.3" textLength="6.2" lengthAdjust="spacingAndGlyphs">R40</text>
<text transform="translate(603.3,682.5) rotate(90)" x="0" y="0" font-family="Liberation Sans, sans-serif" font-weight="bold" font-size="4.5" fill="#ffff00" stroke="#ffff00" stroke-width="0.3" textLength="7" lengthAdjust="spacingAndGlyphs">C3</text>
<text transform="translate(617.2,682.5) rotate(90)" x="0" y="0" font-family="Liberation Sans, sans-serif" font-weight="bold" font-size="4.76" fill="#ffff00" stroke="#ffff00" stroke-width="0.3" textLength="7" lengthAdjust="spacingAndGlyphs">C3</text>
<text transform="translate(619.2,637.8) rotate(90)" x="0" y="0" font-family="Liberation Sans, sans-serif" font-weight="bold" font-size="4.5" fill="#ffff00" stroke="#ffff00" stroke-width="0.3" textLength="5.8" lengthAdjust="spacingAndGlyphs">3</text>
<text transform="translate(623.4,646.3) rotate(90)" x="0" y="0" font-family="Liberation Sans, sans-serif" font-weight="bold" font-size="4.5" fill="#ffff00" stroke="#ffff00" stroke-width="0.3" textLength="4.6" lengthAdjust="spacingAndGlyphs">R</text>
<text transform="translate(641.1,637) rotate(90)" x="0" y="0" font-family="Liberation Sans, sans-serif" font-weight="bold" font-size="4.5" fill="#ffff00" stroke="#ffff00" stroke-width="0.3" textLength="8.8" lengthAdjust="spacingAndGlyphs">U</text>
<text x="652.7" y="648.5" font-family="Liberation Sans, sans-serif" font-weight="bold" font-size="4.62" fill="#ffff00" stroke="#ffff00" stroke-width="0.3" textLength="7.7" lengthAdjust="spacingAndGlyphs">R11</text>
<text x="667.3" y="652.6" font-family="Liberation Sans, sans-serif" font-weight="bold" font-size="4.5" fill="#ffff00" stroke="#ffff00" stroke-width="0.3" textLength="6.2" lengthAdjust="spacingAndGlyphs">R9</text>
<text x="622.3" y="668" font-family="Liberation Sans, sans-serif" font-weight="bold" font-size="4.5" fill="#ffff00" stroke="#ffff00" stroke-width="0.3" textLength="4.2" lengthAdjust="spacingAndGlyphs">U6</text>
<text transform="translate(677.5,697.2) rotate(90)" x="0" y="0" font-family="Liberation Sans, sans-serif" font-weight="bold" font-size="6.58" fill="#ffff00" stroke="#ffff00" stroke-width="0.3" textLength="9.3" lengthAdjust="spacingAndGlyphs">S2</text>
<text transform="translate(607.2,718.8) rotate(90)" x="0" y="0" font-family="Liberation Sans, sans-serif" font-weight="bold" font-size="4.5" fill="#ffff00" stroke="#ffff00" stroke-width="0.3" textLength="6.2" lengthAdjust="spacingAndGlyphs">I</text>
<text transform="translate(710.2,675.2) rotate(90)" x="0" y="0" font-family="Liberation Sans, sans-serif" font-weight="bold" font-size="4.5" fill="#ffff00" stroke="#ffff00" stroke-width="0.3" textLength="7.6" lengthAdjust="spacingAndGlyphs">C</text>
<text transform="translate(699.2,685) rotate(90)" x="0" y="0" font-family="Liberation Sans, sans-serif" font-weight="bold" font-size="5.18" fill="#ffff00" stroke="#ffff00" stroke-width="0.3" textLength="7.6" lengthAdjust="spacingAndGlyphs">G</text>
<text transform="translate(643.4,723.7) rotate(90)" x="0" y="0" font-family="Liberation Sans, sans-serif" font-weight="bold" font-size="5.32" fill="#ffff00" stroke="#ffff00" stroke-width="0.3" textLength="7.6" lengthAdjust="spacingAndGlyphs">R0</text>
<text transform="translate(660.1,716.9) rotate(90)" x="0" y="0" font-family="Liberation Sans, sans-serif" font-weight="bold" font-size="5.32" fill="#ffff00" stroke="#ffff00" stroke-width="0.3" textLength="7.6" lengthAdjust="spacingAndGlyphs">R3</text>
<text transform="translate(691.9,716.1) rotate(90)" x="0" y="0" font-family="Liberation Sans, sans-serif" font-weight="bold" font-size="6.02" fill="#ffff00" stroke="#ffff00" stroke-width="0.3" textLength="7.6" lengthAdjust="spacingAndGlyphs">C3</text>
<text transform="translate(706.8,715.4) rotate(90)" x="0" y="0" font-family="Liberation Sans, sans-serif" font-weight="bold" font-size="4.76" fill="#ffff00" stroke="#ffff00" stroke-width="0.3" textLength="8.3" lengthAdjust="spacingAndGlyphs">R6</text>
<text x="646.4" y="745.9" font-family="Liberation Sans, sans-serif" font-weight="bold" font-size="4.9" fill="#ffff00" stroke="#ffff00" stroke-width="0.3" textLength="4.3" lengthAdjust="spacingAndGlyphs">IO</text>
<text x="666.4" y="762" font-family="Liberation Sans, sans-serif" font-weight="bold" font-size="4.5" fill="#ffff00" stroke="#ffff00" stroke-width="0.3" textLength="4.6" lengthAdjust="spacingAndGlyphs">C5</text>
<text x="694.2" y="762" font-family="Liberation Sans, sans-serif" font-weight="bold" font-size="4.76" fill="#ffff00" stroke="#ffff00" stroke-width="0.3" textLength="6.5" lengthAdjust="spacingAndGlyphs">R20</text>
<text x="696.5" y="773.2" font-family="Liberation Sans, sans-serif" font-weight="bold" font-size="4.5" fill="#ffff00" stroke="#ffff00" stroke-width="0.3" textLength="6.4" lengthAdjust="spacingAndGlyphs">C25</text>
<text x="725.3" y="769" font-family="Liberation Sans, sans-serif" font-weight="bold" font-size="4.9" fill="#ffff00" stroke="#ffff00" stroke-width="0.3" textLength="7.9" lengthAdjust="spacingAndGlyphs">C12</text>
<text x="739.7" y="728.8" font-family="Liberation Sans, sans-serif" font-weight="bold" font-size="4.5" fill="#ffff00" stroke="#ffff00" stroke-width="0.3" textLength="3.8" lengthAdjust="spacingAndGlyphs">CT</text>
<text x="753.4" y="728.8" font-family="Liberation Sans, sans-serif" font-weight="bold" font-size="4.5" fill="#ffff00" stroke="#ffff00" stroke-width="0.3" textLength="6.1" lengthAdjust="spacingAndGlyphs">RO</text>
<text transform="translate(743.2,742.7) rotate(90)" x="0" y="0" font-family="Liberation Sans, sans-serif" font-weight="bold" font-size="5.74" fill="#ffff00" stroke="#ffff00" stroke-width="0.3" textLength="6.1" lengthAdjust="spacingAndGlyphs">G</text>
<text transform="translate(758.7,745.7) rotate(90)" x="0" y="0" font-family="Liberation Sans, sans-serif" font-weight="bold" font-size="6.02" fill="#ffff00" stroke="#ffff00" stroke-width="0.3" textLength="7.6" lengthAdjust="spacingAndGlyphs">R1</text>
<text x="701.5" y="747.3" font-family="Liberation Sans, sans-serif" font-weight="bold" font-size="6.86" fill="#ffff00" stroke="#ffff00" stroke-width="0.3" textLength="7.9" lengthAdjust="spacingAndGlyphs">C2</text>
<text x="789.3" y="748.2" font-family="Liberation Sans, sans-serif" font-weight="bold" font-size="5.88" fill="#ffff00" stroke="#ffff00" stroke-width="0.3" textLength="6.1" lengthAdjust="spacingAndGlyphs">Z7</text>
<text x="807.5" y="752.9" font-family="Liberation Sans, sans-serif" font-weight="bold" font-size="5.74" fill="#ffff00" stroke="#ffff00" stroke-width="0.3" textLength="4.6" lengthAdjust="spacingAndGlyphs">5</text>
<text x="828" y="775.5" font-family="Liberation Sans, sans-serif" font-weight="bold" font-size="4.5" fill="#ffff00" stroke="#ffff00" stroke-width="0.3" textLength="4.9" lengthAdjust="spacingAndGlyphs">C8</text>
<text x="859.9" y="771.7" font-family="Liberation Sans, sans-serif" font-weight="bold" font-size="4.76" fill="#ffff00" stroke="#ffff00" stroke-width="0.3" textLength="6.1" lengthAdjust="spacingAndGlyphs">R3</text>
<text transform="translate(1234.5,616.5) rotate(90)" x="0" y="0" font-family="Liberation Sans, sans-serif" font-weight="bold" font-size="4.5" fill="#ffff00" stroke="#ffff00" stroke-width="0.3" textLength="5.8" lengthAdjust="spacingAndGlyphs">R</text>
<text transform="translate(1249.5,615.4) rotate(90)" x="0" y="0" font-family="Liberation Sans, sans-serif" font-weight="bold" font-size="4.9" fill="#ffff00" stroke="#ffff00" stroke-width="0.3" textLength="6.9" lengthAdjust="spacingAndGlyphs">R5</text>
<text transform="translate(1298.6,664.7) rotate(90)" x="0" y="0" font-family="Liberation Sans, sans-serif" font-weight="bold" font-size="5.6" fill="#ffff00" stroke="#ffff00" stroke-width="0.3" textLength="5.5" lengthAdjust="spacingAndGlyphs">R</text>
<text transform="translate(1242.4,672.1) rotate(90)" x="0" y="0" font-family="Liberation Sans, sans-serif" font-weight="bold" font-size="5.18" fill="#ffff00" stroke="#ffff00" stroke-width="0.3" textLength="8.1" lengthAdjust="spacingAndGlyphs">R03</text>
<text transform="translate(1241.4,731.8) rotate(90)" x="0" y="0" font-family="Liberation Sans, sans-serif" font-weight="bold" font-size="5.6" fill="#ffff00" stroke="#ffff00" stroke-width="0.3" textLength="7.9" lengthAdjust="spacingAndGlyphs">R02</text>
<text transform="translate(1255.8,732.3) rotate(90)" x="0" y="0" font-family="Liberation Sans, sans-serif" font-weight="bold" font-size="4.5" fill="#ffff00" stroke="#ffff00" stroke-width="0.3" textLength="5.7" lengthAdjust="spacingAndGlyphs">G</text>
<text x="1204.4" y="696.4" font-family="Liberation Sans, sans-serif" font-weight="bold" font-size="4.9" fill="#ffff00" stroke="#ffff00" stroke-width="0.3" textLength="5.6" lengthAdjust="spacingAndGlyphs">R3</text>
<text x="1204.4" y="706.5" font-family="Liberation Sans, sans-serif" font-weight="bold" font-size="4.76" fill="#ffff00" stroke="#ffff00" stroke-width="0.3" textLength="5.6" lengthAdjust="spacingAndGlyphs">C5</text>
<text x="1204.4" y="716.3" font-family="Liberation Sans, sans-serif" font-weight="bold" font-size="4.62" fill="#ffff00" stroke="#ffff00" stroke-width="0.3" textLength="5.6" lengthAdjust="spacingAndGlyphs">R3</text>
<text x="1204.4" y="726" font-family="Liberation Sans, sans-serif" font-weight="bold" font-size="4.5" fill="#ffff00" stroke="#ffff00" stroke-width="0.3" textLength="5.6" lengthAdjust="spacingAndGlyphs">R4</text>
<text x="1204.4" y="736.4" font-family="Liberation Sans, sans-serif" font-weight="bold" font-size="4.5" fill="#ffff00" stroke="#ffff00" stroke-width="0.3" textLength="4.6" lengthAdjust="spacingAndGlyphs">C</text>
<text transform="translate(1164.4,698.7) rotate(90)" x="0" y="0" font-family="Liberation Sans, sans-serif" font-weight="bold" font-size="7.98" fill="#ffff00" stroke="#ffff00" stroke-width="0.3" textLength="5.8" lengthAdjust="spacingAndGlyphs">D4</text>
<text transform="translate(1181.7,698.7) rotate(90)" x="0" y="0" font-family="Liberation Sans, sans-serif" font-weight="bold" font-size="5.88" fill="#ffff00" stroke="#ffff00" stroke-width="0.3" textLength="6.9" lengthAdjust="spacingAndGlyphs">S</text>
<text x="1162" y="755.9" font-family="Liberation Sans, sans-serif" font-weight="bold" font-size="4.62" fill="#ffff00" stroke="#ffff00" stroke-width="0.3" textLength="5.8" lengthAdjust="spacingAndGlyphs">R7</text>
<text x="1184" y="759.3" font-family="Liberation Sans, sans-serif" font-weight="bold" font-size="4.5" fill="#ffff00" stroke="#ffff00" stroke-width="0.3" textLength="8.1" lengthAdjust="spacingAndGlyphs">R05</text>
<text x="1155.1" y="773" font-family="Liberation Sans, sans-serif" font-weight="bold" font-size="4.5" fill="#ffff00" stroke="#ffff00" stroke-width="0.3" textLength="4.6" lengthAdjust="spacingAndGlyphs">R2</text>
<text x="1194.5" y="771.6" font-family="Liberation Sans, sans-serif" font-weight="bold" font-size="4.9" fill="#ffff00" stroke="#ffff00" stroke-width="0.3" textLength="6.9" lengthAdjust="spacingAndGlyphs">C6</text>
<text x="1141.5" y="755.3" font-family="Liberation Sans, sans-serif" font-weight="bold" font-size="4.62" fill="#ffff00" stroke="#ffff00" stroke-width="0.3" textLength="4.2" lengthAdjust="spacingAndGlyphs">S</text>
<text x="1141.3" y="765.8" font-family="Liberation Sans, sans-serif" font-weight="bold" font-size="4.5" fill="#ffff00" stroke="#ffff00" stroke-width="0.3" textLength="3.5" lengthAdjust="spacingAndGlyphs">L</text>
<text x="1141.3" y="777.5" font-family="Liberation Sans, sans-serif" font-weight="bold" font-size="4.5" fill="#ffff00" stroke="#ffff00" stroke-width="0.3" textLength="3.5" lengthAdjust="spacingAndGlyphs">S</text>
<text x="1066.5" y="777.5" font-family="Liberation Sans, sans-serif" font-weight="bold" font-size="4.5" fill="#ffff00" stroke="#ffff00" stroke-width="0.3" textLength="4" lengthAdjust="spacingAndGlyphs">L</text>
<text x="1326.4" y="496" font-family="Liberation Sans, sans-serif" font-weight="bold" font-size="4.5" fill="#ffff00" stroke="#ffff00" stroke-width="0.3" textLength="5.8" lengthAdjust="spacingAndGlyphs">D9</text>
<text transform="translate(1026.1,132.1) rotate(90)" x="0" y="0" font-family="Liberation Sans, sans-serif" font-weight="bold" font-size="5.18" fill="#ffff00" stroke="#ffff00" stroke-width="0.3" textLength="8.5" lengthAdjust="spacingAndGlyphs">R6</text>
<text transform="translate(1039.5,133.2) rotate(90)" x="0" y="0" font-family="Liberation Sans, sans-serif" font-weight="bold" font-size="4.9" fill="#ffff00" stroke="#ffff00" stroke-width="0.3" textLength="6.5" lengthAdjust="spacingAndGlyphs">5</text>
<text transform="translate(1185.2,256.5) rotate(90)" x="0" y="0" font-family="Liberation Sans, sans-serif" font-weight="bold" font-size="4.9" fill="#ffff00" stroke="#ffff00" stroke-width="0.3" textLength="6.2" lengthAdjust="spacingAndGlyphs">E</text>
<text transform="translate(1199.1,255.8) rotate(90)" x="0" y="0" font-family="Liberation Sans, sans-serif" font-weight="bold" font-size="5.46" fill="#ffff00" stroke="#ffff00" stroke-width="0.3" textLength="6.9" lengthAdjust="spacingAndGlyphs">R8</text>
<text x="1334.5" y="507.5" font-family="Liberation Sans, sans-serif" font-weight="bold" font-size="5.88" fill="#ffffc0" stroke="#ffffc0" stroke-width="0.3" textLength="8.8" lengthAdjust="spacingAndGlyphs">SYM</text>
<text transform="translate(706.5,228.5) rotate(62)" font-family="Liberation Sans, sans-serif" font-size="6.2" fill="#ffff00">R30</text>
<text x="1299.5" y="140.5" font-family="Liberation Sans, sans-serif" font-size="18.2" fill="#ff0000" textLength="72" lengthAdjust="spacingAndGlyphs" shape-rendering="auto">84.0mm</text>
<rect x="476.5" y="582" width="2" height="196" fill="#d4d4d4"/>
<rect x="1375.5" y="594" width="2" height="184" fill="#d4d4d4"/>
</svg><div style="position:absolute;left:0;top:0;width:1387px;height:84px;background:#f0f0f0"></div>
<div style="position:absolute;left:0;top:53px;width:1387px;height:2px;background:linear-gradient(#f0f0f0,#a8a8a8 50%,#a8a8a8)"></div>
<div style="position:absolute;left:0;top:83px;width:1387px;height:1px;background:#bdbdbd"></div>
<div style="position:absolute;left:0;top:0;width:1.4px;height:778px;background:#9db5d5"></div>
<div style="position:absolute;left:973px;top:83.5px;width:414px;height:3.5px;background:#c0c0c0"></div>
<div style="position:absolute;left:1383.6px;top:84px;width:2.2px;height:694px;background:#c0c0c0"></div>
<svg class="ico" style="left:1376px;top:86px" width="9" height="27" viewBox="0 0 9 27" ><path d="M7.5,1 L2.2,25 H8" fill="none" stroke="#c0c0c0" stroke-width="1.5"/></svg>
<div style="position:absolute;left:3px;top:57px;width:140px;height:23px;background:#fff;border:1px solid #a0a0a0;border-radius:2px"></div>
<svg class="ico" style="left:8px;top:62.5px" width="17" height="12" viewBox="0 0 17 12" ><rect x="0.5" y="0.8" width="14.5" height="9" fill="#108848" stroke="#0a5a30" stroke-width="0.8"/><rect x="1.5" y="2" width="4" height="1.6" fill="#d8f0e0"/><rect x="1.5" y="4.6" width="4" height="1.6" fill="#d8f0e0"/><rect x="1.5" y="7.2" width="4" height="1.4" fill="#d8f0e0"/><rect x="8" y="2" width="4.5" height="4" fill="#4060c0"/><rect x="7" y="9" width="6" height="2.4" fill="#c8d020"/><rect x="14.5" y="2" width="1.5" height="5" fill="#303030"/></svg>
<div style="position:absolute;left:28px;top:61px;font-size:11.3px;line-height:16px;color:#000;letter-spacing:-0.35px">TD7.5V</div>
<svg class="ico" style="left:3px;top:5px" width="3" height="18" viewBox="0 0 3 18" shape-rendering="crispEdges"><rect x="0" y="0" width="3" height="1" fill="#9a9a9a"/><rect x="0" y="2" width="3" height="1" fill="#9a9a9a"/><rect x="0" y="4" width="3" height="1" fill="#9a9a9a"/><rect x="0" y="6" width="3" height="1" fill="#9a9a9a"/><rect x="0" y="8" width="3" height="1" fill="#9a9a9a"/><rect x="0" y="10" width="3" height="1" fill="#9a9a9a"/><rect x="0" y="12" width="3" height="1" fill="#9a9a9a"/><rect x="0" y="14" width="3" height="1" fill="#9a9a9a"/><rect x="0" y="16" width="3" height="1" fill="#9a9a9a"/></svg>
<svg class="ico" style="left:3px;top:32px" width="3" height="18" viewBox="0 0 3 18" shape-rendering="crispEdges"><rect x="0" y="0" width="3" height="1" fill="#9a9a9a"/><rect x="0" y="2" width="3" height="1" fill="#9a9a9a"/><rect x="0" y="4" width="3" height="1" fill="#9a9a9a"/><rect x="0" y="6" width="3" height="1" fill="#9a9a9a"/><rect x="0" y="8" width="3" height="1" fill="#9a9a9a"/><rect x="0" y="10" width="3" height="1" fill="#9a9a9a"/><rect x="0" y="12" width="3" height="1" fill="#9a9a9a"/><rect x="0" y="14" width="3" height="1" fill="#9a9a9a"/><rect x="0" y="16" width="3" height="1" fill="#9a9a9a"/></svg>
<svg class="ico" style="left:635px;top:5px" width="3" height="18" viewBox="0 0 3 18" shape-rendering="crispEdges"><rect x="0" y="0" width="3" height="1" fill="#9a9a9a"/><rect x="0" y="2" width="3" height="1" fill="#9a9a9a"/><rect x="0" y="4" width="3" height="1" fill="#9a9a9a"/><rect x="0" y="6" width="3" height="1" fill="#9a9a9a"/><rect x="0" y="8" width="3" height="1" fill="#9a9a9a"/><rect x="0" y="10" width="3" height="1" fill="#9a9a9a"/><rect x="0" y="12" width="3" height="1" fill="#9a9a9a"/><rect x="0" y="14" width="3" height="1" fill="#9a9a9a"/><rect x="0" y="16" width="3" height="1" fill="#9a9a9a"/></svg>
<svg class="ico" style="left:686px;top:32px" width="3" height="18" viewBox="0 0 3 18" shape-rendering="crispEdges"><rect x="0" y="0" width="3" height="1" fill="#9a9a9a"/><rect x="0" y="2" width="3" height="1" fill="#9a9a9a"/><rect x="0" y="4" width="3" height="1" fill="#9a9a9a"/><rect x="0" y="6" width="3" height="1" fill="#9a9a9a"/><rect x="0" y="8" width="3" height="1" fill="#9a9a9a"/><rect x="0" y="10" width="3" height="1" fill="#9a9a9a"/><rect x="0" y="12" width="3" height="1" fill="#9a9a9a"/><rect x="0" y="14" width="3" height="1" fill="#9a9a9a"/><rect x="0" y="16" width="3" height="1" fill="#9a9a9a"/></svg>
<svg class="ico" style="left:10px;top:5px" width="18" height="15" viewBox="0 0 18 15" ><rect x="8.2" y="0" width="8.8" height="14.8" fill="#a0a0a0"/><path d="M0,0 h7 v5.5 a2.4,2.4 0 0 1 0,4.5 v4.8 h-7z" fill="#4a4ae6"/><circle cx="8" cy="7.6" r="2.3" fill="#4a4ae6"/></svg>
<div id="filebtn"></div>
<div class="mb" style="left:31.5px">D<u>X</u>P</div>
<div class="mb" style="left:67.5px"><u>F</u>ile</div>
<div class="mb" style="left:102.5px"><u>E</u>dit</div>
<div class="mb" style="left:139px"><u>V</u>iew</div>
<div class="mb" style="left:183px">Proje<u>c</u>t</div>
<div class="mb" style="left:239px"><u>P</u>lace</div>
<div class="mb" style="left:285px"><u>D</u>esign</div>
<div class="mb" style="left:341px"><u>T</u>ools</div>
<div class="mb" style="left:389px"><u>A</u>uto Route</div>
<div class="mb" style="left:470px"><u>R</u>eports</div>
<div class="mb" style="left:532px"><u>W</u>indow</div>
<div class="mb" style="left:595px"><u>H</u>elp</div>
<svg class="ico" style="left:643px;top:4px" width="17" height="17" viewBox="0 0 17 17" ><path d="M1,1 V11 H10z" fill="#88a8e8" stroke="#3858b0" stroke-width="1.2"/><path d="M3,5.5 V9 H6z" fill="#f0f0f0" stroke="#3858b0" stroke-width="0.6"/><rect x="1" y="12" width="15" height="3.6" fill="#f0c850" stroke="#b08820" stroke-width="0.7"/><path d="M6,10.5 L14,2.5" stroke="#e8b870" stroke-width="3"/><path d="M13,3.5 l2,-2" stroke="#e06060" stroke-width="3"/><path d="M5,11.5 l1.5,-2.2" stroke="#404040" stroke-width="1.2"/></svg>
<svg class="ico" style="left:666.5px;top:11.5px" width="6" height="3.5" viewBox="0 0 6 3.5" ><polygon points="0,0 6,0 3,3.4" fill="#000"/></svg>
<svg class="ico" style="left:682px;top:6px" width="15" height="14" viewBox="0 0 15 14" ><rect x="0.5" y="0.5" width="10" height="3.4" fill="#f4f8ff" stroke="#7088b8" stroke-width="0.9"/><rect x="0.5" y="4.6" width="13.5" height="3.8" fill="#a8c4f0" stroke="#5878c0" stroke-width="0.9"/><rect x="0.5" y="9.2" width="10" height="3.4" fill="#f4f8ff" stroke="#7088b8" stroke-width="0.9"/></svg>
<svg class="ico" style="left:705px;top:11.5px" width="6" height="3.5" viewBox="0 0 6 3.5" ><polygon points="0,0 6,0 3,3.4" fill="#000"/></svg>
<svg class="ico" style="left:719px;top:5px" width="17" height="16" viewBox="0 0 17 16" ><path d="M2,9 l1.5,-7 h3 l0.5,7z" fill="#8090c0" stroke="#5060a0" stroke-width="0.6"/><path d="M8,9 l0.5,-7 h3 l1.5,7z" fill="#8090c0" stroke="#5060a0" stroke-width="0.6"/><rect x="6.4" y="3" width="2.2" height="3" fill="#5868a8"/><circle cx="8.5" cy="13.5" r="1.7" fill="#fffbd0" stroke="#c8c080" stroke-width="0.6"/><circle cx="14" cy="13.5" r="1.7" fill="#fffbd0" stroke="#c8c080" stroke-width="0.6"/></svg>
<svg class="ico" style="left:743px;top:11.5px" width="6" height="3.5" viewBox="0 0 6 3.5" ><polygon points="0,0 6,0 3,3.4" fill="#000"/></svg>
<svg class="ico" style="left:757px;top:4.5px" width="18" height="16.5" viewBox="0 0 18 16.5" ><path d="M2.5,2 V13.5 H14" fill="none" stroke="#5078d0" stroke-width="1.6"/><rect x="5" y="6" width="12" height="3.6" fill="#f0c850" stroke="#b08820" stroke-width="0.6"/><circle cx="2.5" cy="2" r="1.7" fill="#fffbd0" stroke="#c8c080" stroke-width="0.6"/><circle cx="14" cy="13.5" r="1.7" fill="#fffbd0" stroke="#c8c080" stroke-width="0.6"/></svg>
<svg class="ico" style="left:781px;top:11.5px" width="6" height="3.5" viewBox="0 0 6 3.5" ><polygon points="0,0 6,0 3,3.4" fill="#000"/></svg>
<svg class="ico" style="left:795.5px;top:6px" width="15" height="14.5" viewBox="0 0 15 14.5" ><path d="M0.7,0.7 h13 v5.6 h-6 v2.2 h-7z" fill="#a8c4f0" stroke="#6080c0" stroke-width="1"/><path d="M13.7,8 v5.6 h-13 v-3 h7 v-2.6z" fill="#c8dcf8" stroke="#6080c0" stroke-width="1"/></svg>
<svg class="ico" style="left:819px;top:11.5px" width="6" height="3.5" viewBox="0 0 6 3.5" ><polygon points="0,0 6,0 3,3.4" fill="#000"/></svg>
<svg class="ico" style="left:833.5px;top:5.8px" width="15" height="14" viewBox="0 0 15 14" ><rect x="2" y="0" width="1.3" height="14" fill="#5078d0"/><rect x="5.5" y="0" width="1.3" height="14" fill="#5078d0"/><rect x="9" y="0" width="1.3" height="14" fill="#5078d0"/><rect x="12.5" y="0" width="1.3" height="14" fill="#5078d0"/><rect x="0" y="2" width="15" height="1.3" fill="#5078d0"/><rect x="0" y="5.3" width="15" height="1.3" fill="#5078d0"/><rect x="0" y="8.6" width="15" height="1.3" fill="#5078d0"/><rect x="0" y="12" width="15" height="1.3" fill="#5078d0"/></svg>
<svg class="ico" style="left:857px;top:11.5px" width="6" height="3.5" viewBox="0 0 6 3.5" ><polygon points="0,0 6,0 3,3.4" fill="#000"/></svg>
<svg class="ico" style="left:13px;top:33px" width="11" height="14.4" viewBox="0 0 11 14.4" ><path d="M0.6,0.6 h6.8 l3,3 v10 h-9.8z" fill="#fff" stroke="#98a4b8" stroke-width="1"/><path d="M7.4,0.6 v3 h3" fill="#dde4f0" stroke="#98a4b8" stroke-width="0.8"/><path d="M1.2,13.3 h8.8" stroke="#6078a0" stroke-width="1"/></svg>
<svg class="ico" style="left:33.5px;top:32px" width="18" height="16" viewBox="0 0 18 16" ><path d="M1,5 h5 l1.5,1.5 h6.5 v8 h-13z" fill="#e8c878" stroke="#b89850" stroke-width="0.8"/><path d="M3.5,8 h13 l-2.8,6.5 h-12.7z" fill="#fbe39a" stroke="#c0a058" stroke-width="0.8"/><path d="M9.5,3.5 q3,-3 6,0" fill="none" stroke="#7090c0" stroke-width="1.4"/><polygon points="16.5,1.2 16.5,5 13,4" fill="#7090c0"/></svg>
<svg class="ico" style="left:57.5px;top:33px" width="16" height="16" viewBox="0 0 16 16" ><rect x="1.5" y="1.5" width="13" height="13" rx="1" fill="#6868d8" stroke="#4848a8" stroke-width="1"/><rect x="4" y="2" width="8" height="5" fill="#f4f4ff"/><rect x="4.5" y="10" width="7" height="4.5" fill="#c8c8e8"/><rect x="9" y="11" width="1.6" height="3" fill="#5050a0"/></svg>
<svg class="ico" style="left:301.5px;top:31px" width="17" height="17" viewBox="0 0 17 17" ><rect x="1" y="2.5" width="10" height="11.5" fill="#d8d8d8" stroke="#b8b8b8" stroke-width="0.9"/><rect x="4" y="0.8" width="4" height="3" fill="#c8c8c8"/><rect x="7" y="6.5" width="8.5" height="9.5" fill="#ececec" stroke="#b8b8b8" stroke-width="0.9"/><path d="M9,9.5 h5 M9,11.5 h5 M9,13.5 h5" stroke="#c0c0c0" stroke-width="0.8"/><rect x="3" y="5" width="5" height="1" fill="#c0c0c0"/></svg>
<div class="tsep" style="left:324px"></div>
<div class="tsep" style="left:421px"></div>
<div class="tsep" style="left:472px"></div>
<div class="tsep" style="left:500.5px"></div>
<div class="tsep" style="left:528px"></div>
<svg class="ico" style="left:330px;top:32.5px" width="15.5" height="15" viewBox="0 0 15.5 15" ><rect x="0.8" y="0.8" width="13.6" height="13" fill="none" stroke="#384878" stroke-width="1.1" stroke-dasharray="2,1.4"/></svg>
<svg class="ico" style="left:353.5px;top:32.5px" width="14.5" height="14" viewBox="0 0 14.5 14" ><path d="M7,0.5 V13.5 M0.5,7 H13.5" stroke="#506888" stroke-width="1.1"/><path d="M7,0 l-2,2.2 h4z M7,14 l-2,-2.2 h4z M0,7 l2.2,-2 v4z M14,7 l-2.2,-2 v4z" fill="#506888"/></svg>
<svg class="ico" style="left:376.5px;top:34px" width="15.5" height="12" viewBox="0 0 15.5 12" ><path d="M4,1.8 L11,9.5 M4,9.5 L11,1.8" stroke="#506888" stroke-width="1.1"/><circle cx="2" cy="1.8" r="1.6" fill="#fffbd0" stroke="#c8c080" stroke-width="0.6"/><circle cx="2" cy="9.6" r="1.6" fill="#fffbd0" stroke="#c8c080" stroke-width="0.6"/><circle cx="12.8" cy="1.8" r="1.9" fill="#5070b0"/><circle cx="12.8" cy="9.6" r="1.9" fill="#5070b0"/></svg>
<svg class="ico" style="left:398.5px;top:31.5px" width="18" height="15" viewBox="0 0 18 15" ><path d="M2,6 L9.5,13.5 M9.5,6 L2,13.5" stroke="#e84838" stroke-width="2.4" stroke-linecap="round"/><path d="M8,0.8 h9 l-3.3,3.8 v4 l-2.4,-1.3 v-2.7z" fill="#c8d8f0" stroke="#6080b0" stroke-width="0.8"/></svg>
<svg class="ico" style="left:428px;top:33.5px" width="13" height="12" viewBox="0 0 13 12" ><path d="M3,4.5 a4,4 0 1 1 3.5,6.5" fill="none" stroke="#c4c4c4" stroke-width="2.4"/><polygon points="0,4 6.5,4 3.2,0" fill="#c4c4c4"/></svg>
<svg class="ico" style="left:451.5px;top:33.5px" width="13" height="12" viewBox="0 0 13 12" ><path d="M10,4.5 a4,4 0 1 0 -3.5,6.5" fill="none" stroke="#c4c4c4" stroke-width="2.4"/><polygon points="13,4 6.5,4 9.8,0" fill="#c4c4c4"/></svg>
<svg class="ico" style="left:478.5px;top:31px" width="14" height="17" viewBox="0 0 14 17" ><rect x="1.5" y="0.5" width="5" height="5" fill="#f8e060" stroke="#c8a820" stroke-width="0.5" stroke-dasharray="1,0.6"/><path d="M1,16 L4,12" stroke="#404040" stroke-width="1.1"/><path d="M3.5,12.5 L11.5,3.5" stroke="#e86030" stroke-width="3.2" stroke-linecap="round"/></svg>
<svg class="ico" style="left:505.5px;top:31.5px" width="17" height="16.5" viewBox="0 0 17 16.5" ><path d="M1,14 v-8 l2,-3 h2 v11z" fill="#9098d8" stroke="#6068b0" stroke-width="0.6"/><rect x="5.5" y="2" width="7" height="10" fill="#e8d8b0" stroke="#a09070" stroke-width="0.7"/><rect x="7" y="0.6" width="4" height="2.4" fill="#707070"/><circle cx="10.5" cy="9.5" r="3.3" fill="#e8f4ff" stroke="#707880" stroke-width="1.1"/><path d="M12.8,12 l3,3.2" stroke="#d0a040" stroke-width="2"/></svg>
<div style="position:absolute;left:531px;top:29px;width:149px;height:22px;background:#fff"></div>
<div style="position:absolute;left:534.5px;top:32px;font-size:13px;line-height:16px;color:#000;letter-spacing:-0.12px">(Not Saved)</div>
<div style="position:absolute;left:668px;top:30px;width:11px;height:20px;background:#f4f4f4"></div>
<svg class="ico" style="left:670.8px;top:38.8px" width="6" height="3.5" viewBox="0 0 6 3.5" ><polygon points="0,0 6,0 3,3.4" fill="#000"/></svg>
<svg class="ico" style="left:693.5px;top:32px" width="17" height="16" viewBox="0 0 17 16" ><path d="M2,15 V5 H9" fill="none" stroke="#e8a838" stroke-width="2.6"/><polygon points="8,1.2 12.5,5 8,8.8" fill="#e8a838"/><path d="M5,15 L14,5" stroke="#5080e0" stroke-width="1.3"/><path d="M16,0.5 a3,3 0 0 0 0,6" fill="none" stroke="#e8a838" stroke-width="1.5"/></svg>
<svg class="ico" style="left:716.5px;top:33px" width="17" height="14.5" viewBox="0 0 17 14.5" ><path d="M0.5,1.5 H9 M6.5,1 V14" stroke="#4878d8" stroke-width="2.4" fill="none"/><path d="M7.5,4 L15,9 M7.5,7 L15,12.5" stroke="#4878d8" stroke-width="1.6"/></svg>
<svg class="ico" style="left:739.5px;top:32px" width="17" height="16" viewBox="0 0 17 16" ><path d="M1.5,15 V4.5 H9" fill="none" stroke="#e8a838" stroke-width="1.4"/><path d="M4.5,15 V7.5 H9" fill="none" stroke="#e8a838" stroke-width="1.4"/><polygon points="8,2 12.5,6 8,10" fill="#e8a838"/><path d="M7,15 L15,6" stroke="#5080e0" stroke-width="1.3"/><path d="M16.5,0.5 a3,3 0 0 0 0,6" fill="none" stroke="#e8a838" stroke-width="1.5"/></svg>
<svg class="ico" style="left:764.5px;top:33.5px" width="13" height="13" viewBox="0 0 13 13" ><circle cx="6.4" cy="6.4" r="4.2" fill="none" stroke="#e8a838" stroke-width="3.2"/><circle cx="6.4" cy="6.4" r="2" fill="#fff6d8"/></svg>
<svg class="ico" style="left:786px;top:32px" width="17" height="16" viewBox="0 0 17 16" ><rect x="4.2" y="8" width="3.6" height="8" fill="#e0a060"/><circle cx="6" cy="5.5" r="3.6" fill="none" stroke="#e8a838" stroke-width="3"/><circle cx="6" cy="5.5" r="1.6" fill="#fff6d8"/><rect x="10.5" y="3.5" width="5.5" height="3" fill="#40a8c8"/></svg>
<svg class="ico" style="left:808.5px;top:32.5px" width="18" height="15" viewBox="0 0 18 15" ><path d="M3,13 A7.5,7.5 0 1 1 16.5,10" fill="none" stroke="#e8a838" stroke-width="2"/><path d="M3.5,13 L9,8" stroke="#5080e0" stroke-width="1.2"/><circle cx="3.8" cy="12.8" r="1.4" fill="#5080e0"/></svg>
<svg class="ico" style="left:831.5px;top:34px" width="16" height="12" viewBox="0 0 16 12" ><defs><linearGradient id="og" x1="0" y1="0" x2="1" y2="1"><stop offset="0" stop-color="#f8d070"/><stop offset="1" stop-color="#d8a868"/></linearGradient></defs><rect x="0.6" y="0.6" width="14.6" height="10.4" fill="url(#og)" stroke="#c89838" stroke-width="1"/></svg>
<svg class="ico" style="left:855px;top:33.8px" width="16" height="12" viewBox="0 0 16 12" ><rect x="8" y="0" width="1.3" height="1.3" fill="#e0b040"/><rect x="9.9" y="0" width="1.3" height="1.3" fill="#e0b040"/><rect x="11.8" y="0" width="1.3" height="1.3" fill="#e0b040"/><rect x="8" y="1.9" width="1.3" height="1.3" fill="#e0b040"/><rect x="9.9" y="1.9" width="1.3" height="1.3" fill="#e0b040"/><rect x="11.8" y="1.9" width="1.3" height="1.3" fill="#e0b040"/><rect x="4" y="3.8" width="1.3" height="1.3" fill="#e0b040"/><rect x="5.9" y="3.8" width="1.3" height="1.3" fill="#e0b040"/><rect x="7.8" y="3.8" width="1.3" height="1.3" fill="#e0b040"/><rect x="9.7" y="3.8" width="1.3" height="1.3" fill="#e0b040"/><rect x="11.6" y="3.8" width="1.3" height="1.3" fill="#e0b040"/><rect x="4" y="5.7" width="1.3" height="1.3" fill="#e0b040"/><rect x="5.9" y="5.7" width="1.3" height="1.3" fill="#e0b040"/><rect x="7.8" y="5.7" width="1.3" height="1.3" fill="#e0b040"/><rect x="9.7" y="5.7" width="1.3" height="1.3" fill="#e0b040"/><rect x="11.6" y="5.7" width="1.3" height="1.3" fill="#e0b040"/><rect x="0" y="7.6" width="1.3" height="1.3" fill="#e0b040"/><rect x="1.9" y="7.6" width="1.3" height="1.3" fill="#e0b040"/><rect x="3.8" y="7.6" width="1.3" height="1.3" fill="#e0b040"/><rect x="5.7" y="7.6" width="1.3" height="1.3" fill="#e0b040"/><rect x="7.6" y="7.6" width="1.3" height="1.3" fill="#e0b040"/><rect x="9.5" y="7.6" width="1.3" height="1.3" fill="#e0b040"/><rect x="11.4" y="7.6" width="1.3" height="1.3" fill="#e0b040"/><rect x="0" y="9.5" width="1.3" height="1.3" fill="#e0b040"/><rect x="1.9" y="9.5" width="1.3" height="1.3" fill="#e0b040"/><rect x="3.8" y="9.5" width="1.3" height="1.3" fill="#e0b040"/><rect x="5.7" y="9.5" width="1.3" height="1.3" fill="#e0b040"/><rect x="7.6" y="9.5" width="1.3" height="1.3" fill="#e0b040"/><rect x="9.5" y="9.5" width="1.3" height="1.3" fill="#e0b040"/><rect x="11.4" y="9.5" width="1.3" height="1.3" fill="#e0b040"/></svg>
<div style="position:absolute;left:877.5px;top:28.5px;font-family:'Liberation Serif',serif;font-size:21px;line-height:24px;color:#5878c0">A</div>
<svg class="ico" style="left:901px;top:32.5px" width="16" height="15" viewBox="0 0 16 15" ><rect x="1" y="1" width="13.5" height="12.5" fill="none" stroke="#606878" stroke-width="1" stroke-dasharray="1.2,1"/><rect x="3.2" y="3.2" width="9" height="8.2" fill="#98a8d0" stroke="#6878a8" stroke-width="0.8"/></svg><div id="menu">
<div class="mi"><span class="ml"><u>N</u>ew</span><span class="ma"></span></div>
<div class="mi"><span class="mic"><svg width="18" height="16" viewBox="0 0 18 16"><path d="M1,5 h5 l1.5,1.5 h6.5 v8 h-13z" fill="#e8c878" stroke="#b89850" stroke-width="0.8"/><path d="M3.5,8 h13 l-2.8,6.5 h-12.7z" fill="#fbe39a" stroke="#c0a058" stroke-width="0.8"/><path d="M9.5,3.5 q3,-3 6,0" fill="none" stroke="#7090c0" stroke-width="1.4"/><polygon points="16.5,1.2 16.5,5 13,4" fill="#7090c0"/></svg></span><span class="ml"><u>O</u>pen...</span><span class="ms">Ctrl+O</span></div>
<div class="mi"><span class="ml"><u>I</u>mport...</span></div>
<div class="mi"><span class="ml"><u>C</u>lose</span><span class="ms">Ctrl+F4</span></div>
<div class="msep"><i></i></div>
<div class="mi"><span class="mic"><svg width="18" height="16" viewBox="0 0 18 16"><path d="M1,5 h5 l1.5,1.5 h6.5 v8 h-13z" fill="#e8c878" stroke="#b89850" stroke-width="0.8"/><path d="M3.5,8 h13 l-2.8,6.5 h-12.7z" fill="#fbe39a" stroke="#c0a058" stroke-width="0.8"/><rect x="9" y="1" width="6" height="5" fill="#fff" stroke="#8090a8" stroke-width="0.8"/><path d="M10,3 h4 M10,4.5 h3" stroke="#8090a8" stroke-width="0.7"/></svg></span><span class="ml">Open Pro<u>j</u>ect...</span></div>
<div class="mi"><span class="ml">Open Design Wor<u>k</u>space...</span></div>
<div class="msep"><i></i></div>
<div class="mi"><span class="mic"><svg width="16" height="16" viewBox="0 0 16 16"><rect x="1.5" y="1.5" width="13" height="13" rx="1" fill="#6868d8" stroke="#4848a8" stroke-width="1"/><rect x="4" y="2" width="8" height="5" fill="#f4f4ff"/><rect x="4.5" y="10" width="7" height="4.5" fill="#c8c8e8"/><rect x="9" y="11" width="1.6" height="3" fill="#5050a0"/></svg></span><span class="ml"><u>S</u>ave</span><span class="ms">Ctrl+S</span></div>
<div class="mi hl"><span class="ml">Save <u>A</u>s...</span></div>
<div class="mi"><span class="ml">Save Cop<u>y</u> As...</span></div>
<div class="mi dis"><span class="ml">Save A<u>l</u>l</span></div>
<div class="msep"><i></i></div>
<div class="mi dis"><span class="ml">Save Project As...</span></div>
<div class="mi"><span class="ml">Save Design Workspace As...</span></div>
<div class="msep"><i></i></div>
<div class="mi"><span class="ml"><u>F</u>abrication Outputs</span><span class="ma"></span></div>
<div class="mi"><span class="ml">Assem<u>b</u>ly Outputs</span><span class="ma"></span></div>
<div class="msep"><i></i></div>
<div class="mi"><span class="ml">Page Set<u>u</u>p...</span></div>
<div class="mi"><span class="mic"><svg width="17" height="17" viewBox="0 0 17 17"><path d="M2.5,1.5 h7 l3,3 v10 h-10z" fill="#fff" stroke="#a0a8b8" stroke-width="0.9"/><circle cx="10" cy="10" r="3.2" fill="#e8f0ff" stroke="#909090" stroke-width="1.2"/><path d="M12.3,12.3 l3,3" stroke="#d0a040" stroke-width="2"/></svg></span><span class="ml">Print Pre<u>v</u>iew...</span></div>
<div class="mi"><span class="mic"><svg width="17" height="16" viewBox="0 0 17 16"><path d="M4,2 h9 l-1,5 h-9z" fill="#fff" stroke="#a0a0b0" stroke-width="0.8"/><path d="M1.5,8 l1.5,-2 h11 l1.5,2 v5 h-14z" fill="#d8d8e0" stroke="#8888a0" stroke-width="0.9"/><rect x="3" y="11" width="11" height="2.5" fill="#b0b0c0"/></svg></span><span class="ml"><u>P</u>rint...</span><span class="ms">Ctrl+P</span></div>
<div class="msep"><i></i></div>
<div class="mi"><span class="mic"><svg width="16" height="16" viewBox="0 0 16 16"><rect x="2" y="2" width="12" height="13" fill="#fff" stroke="#a0a0a0" stroke-width="0.8"/><rect x="1" y="1.5" width="9" height="3.5" fill="#e02020"/><rect x="3" y="7" width="9" height="7" fill="#30a060"/><path d="M5,9 h4 l2,4" stroke="#d8f0d8" stroke-width="1" fill="none"/></svg></span><span class="ml">S<u>m</u>art PDF...</span></div>
<div class="msep"><i></i></div>
<div class="mi"><span class="ml">Import Wizard</span></div>
<div class="msep"><i></i></div>
<div class="mi"><span class="ml"><u>R</u>ecent Documents</span><span class="ma"></span></div>
<div class="mi"><span class="ml">Recent Projects</span><span class="ma"></span></div>
<div class="mi"><span class="ml">Recent Design Workspaces</span><span class="ma"></span></div>
<div class="msep"><i></i></div>
<div class="mi"><span class="ml">E<u>x</u>it</span><span class="ms">Alt+F4</span></div>
</div>
</div></body></html>
